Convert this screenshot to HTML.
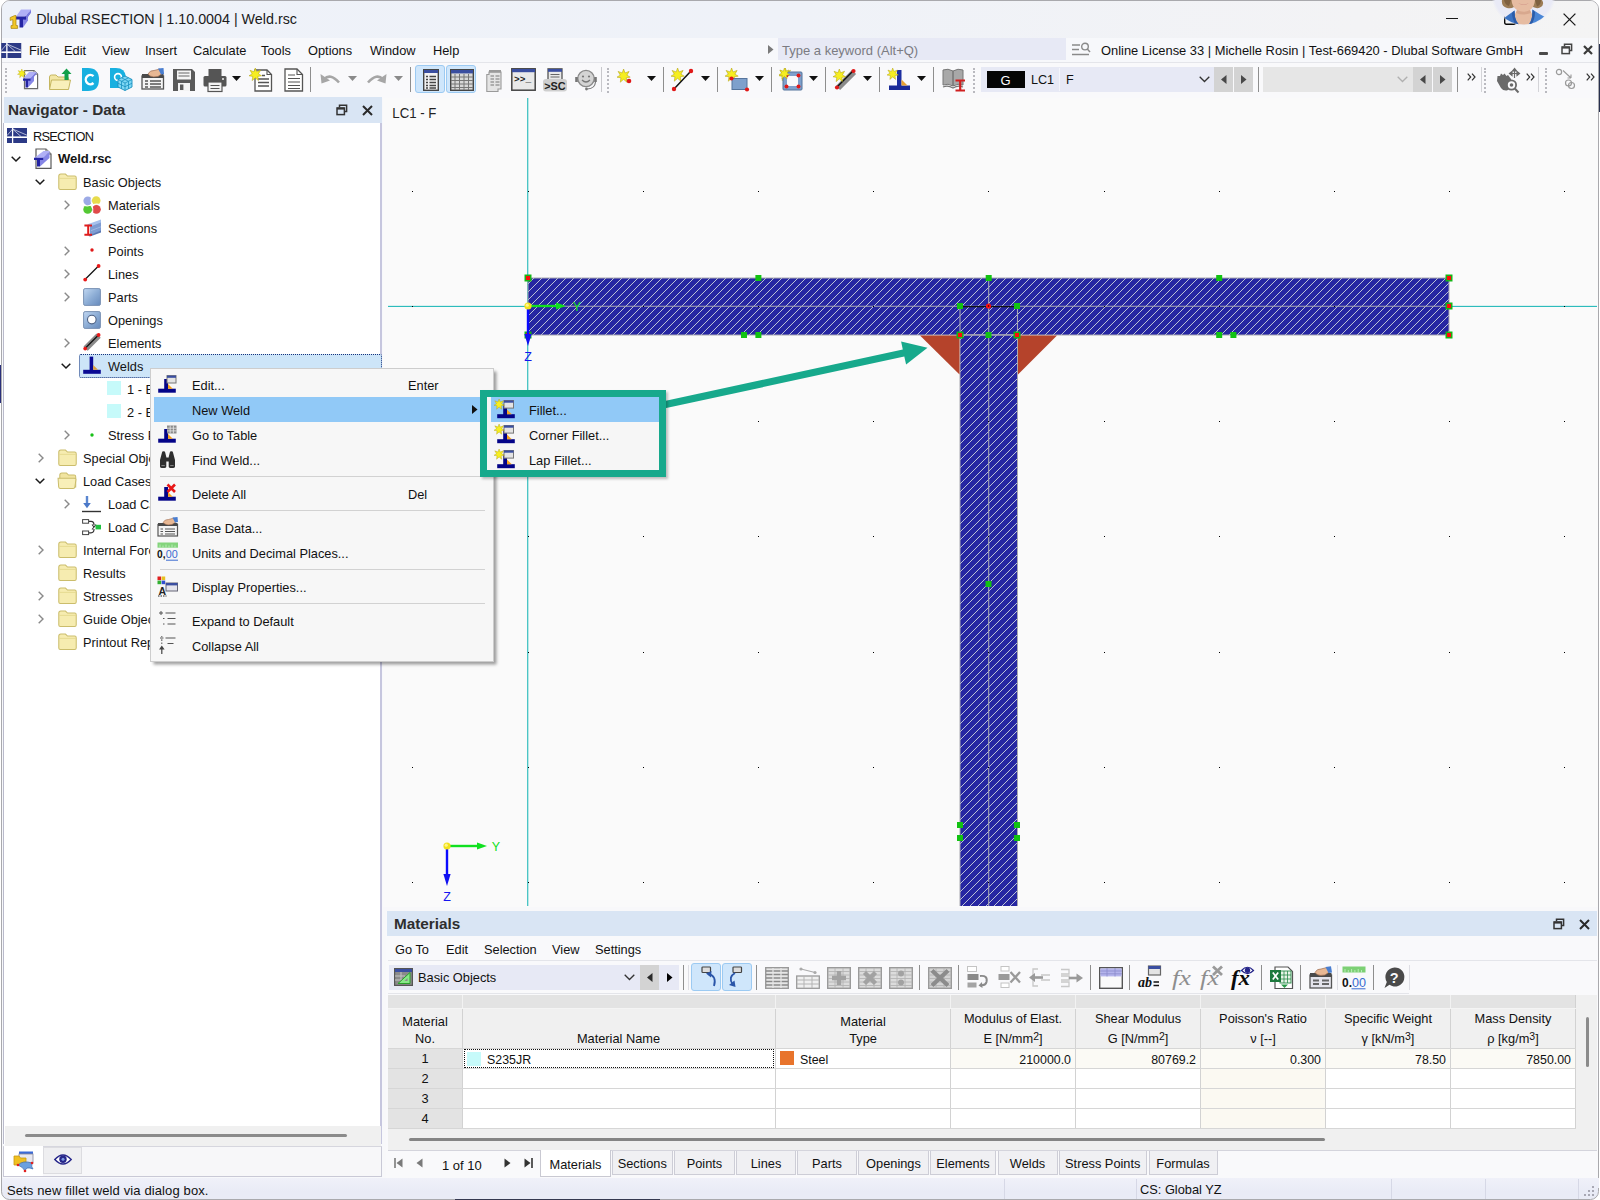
<!DOCTYPE html>
<html lang="en"><head><meta charset="utf-8"><title>Dlubal RSECTION | 1.10.0004 | Weld.rsc</title>
<style>
*{box-sizing:border-box;margin:0;padding:0}
html,body{width:1600px;height:1200px;overflow:hidden;background:#f3f4f8}
body{font-family:"Liberation Sans",sans-serif;font-size:13px;color:#111;}
#app{position:absolute;left:0;top:0;width:1600px;height:1200px;overflow:hidden}
.abs{position:absolute}
.t{position:absolute;white-space:nowrap;line-height:1}
svg{position:absolute;overflow:visible}

</style></head>
<body>
<div id="app">
<!-- frame -->
<div class="abs" style="left:0;top:0;width:1600px;height:1200px;background:#ffffff"></div>
<div class="abs" id="win" style="left:1px;top:0;width:1598px;height:1200px;border-radius:9px;background:#f7f8fb;border:1px solid #a9a9ad"></div>

<!-- titlebar -->
<div class="abs" style="left:2px;top:1px;width:1596px;height:37px;border-radius:8px 8px 0 0;background:linear-gradient(90deg,#eef2f9 0%,#eff2f8 50%,#f3f3f5 85%,#f4f4f4 100%)"></div>
<svg style="left:9px;top:8px" width="23" height="22" viewBox="0 0 23 22"><polygon points="14,11.5 19,4.5 19,12.5 14,19.5" fill="#8686e6"/><polygon points="14,11.5 17,11.5 22,4.5 19,4.5" fill="#5a5ac4"/><polygon points="7,8.5 17,8.5 22,1.5 12,1.5" fill="#b0b0f6"/><polygon points="17,8.5 22,1.5 22,4.5 17,11.5" fill="#7a7ade"/><path d="M7,8.5 H17 V11.5 H14 V19.5 H10.5 V11.5 H7 Z" fill="#2424a4"/><path d="M1.2,9.5 L5.6,7.6 H7 V17.6 H8.6 V20.4 H2 V17.6 H3.8 V11.6 L1.2,12.4 Z" fill="#f2c828" stroke="#a8820c" stroke-width="0.7"/></svg>
<div class="t" style="left:36.3px;top:12.2px;font-size:14.3px;color:#1b1b1b">Dlubal RSECTION | 1.10.0004 | Weld.rsc</div>
<div class="abs" style="left:1446px;top:18px;width:12px;height:1.4px;background:#1a1a1a"></div>
<svg style="left:1563px;top:13px" width="13" height="13" viewBox="0 0 13 13"><path d="M0.6,0.6 L12.4,12.4 M12.4,0.6 L0.6,12.4" stroke="#1a1a1a" stroke-width="1.3"/></svg>
<svg style="left:1504px;top:13px" width="12" height="12" viewBox="0 0 12 12"><rect x="0.7" y="0.7" width="10.6" height="10.6" rx="1.5" fill="none" stroke="#0a0a0a" stroke-width="1.4"/></svg>
<svg style="left:1485px;top:0" width="80" height="32" viewBox="1485 0 80 32">
<defs><clipPath id="av"><circle cx="1523.5" cy="-6.5" r="31"/></clipPath>
<radialGradient id="avg" cx="1523.5" cy="-6.5" r="32.5" gradientUnits="userSpaceOnUse"><stop offset="0.9" stop-color="#e9eaf6"/><stop offset="1" stop-color="#e9eaf6" stop-opacity="0"/></radialGradient></defs>
<circle cx="1523.5" cy="-6.5" r="32.5" fill="url(#avg)"/>
<g clip-path="url(#av)">
<path d="M1502,0 Q1501,6 1507,8 Q1511,9 1514,7 L1533,7 Q1537,9 1540,7.5 Q1545,5 1542,0 Z" fill="#9c7c56"/>
<path d="M1504,0 Q1505,5 1509,6 L1511,0 Z M1541,0 Q1541,5 1537,6.5 L1535,0 Z" fill="#7e6040"/>
<path d="M1511.5,0 Q1512,7 1517,10 L1515,14 L1514,26 H1533 L1532,14 L1530,10 Q1534.5,7 1535,0 Z" fill="#e6bca2"/>
<path d="M1517,10 Q1523.5,13.5 1530,10 L1531,13 Q1523.5,16 1516,13 Z" fill="#d8a88e"/>
<path d="M1518,3.2 Q1523.5,5.2 1529,3.2 Q1523.5,6 1518,3.2 Z" fill="#b86c6c"/>
<path d="M1503,19 Q1508,15 1514.5,10.5 L1515,17 Q1516,22 1520,26 L1500,26 Z" fill="#3c74c4"/>
<path d="M1545,17 Q1539,14 1532.5,9.5 L1532,17 Q1531,22 1528,26 L1548,26 Z" fill="#4a86d6"/>
<path d="M1514.5,10.5 L1515,17 Q1516,22 1520,26 L1517,26 Q1512,20 1512,13 Z" fill="#2c5ca8"/>
<path d="M1532.5,9.5 L1532,17 Q1531,22 1528,26 L1530.5,26 Q1535,20 1535,12 Z" fill="#2c5ca8"/>
</g></svg>
<!-- menubar -->
<div class="abs" style="left:2px;top:38px;width:1596px;height:24px;background:#f7f8fb"></div>
<svg style="left:0.7px;top:42.5px" width="20.5" height="15" viewBox="0 0 20 15"><rect width="20" height="15" fill="#2c3a86"/><path d="M0,9.2 H20" stroke="#fff" stroke-width="1.6"/><path d="M5.6,0 V15" stroke="#fff" stroke-width="1.3"/><path d="M5.6,1 L0,7.6 M5.6,1 L20,7.2 M5.6,1 L14,8.5" stroke="#e8ecf8" stroke-width="0.7" fill="none"/></svg>
<div class="t" style="left:29px;top:44.5px;font-size:12.8px;color:#111">File</div>
<div class="t" style="left:64px;top:44.5px;font-size:12.8px;color:#111">Edit</div>
<div class="t" style="left:102px;top:44.5px;font-size:12.8px;color:#111">View</div>
<div class="t" style="left:145px;top:44.5px;font-size:12.8px;color:#111">Insert</div>
<div class="t" style="left:193px;top:44.5px;font-size:12.8px;color:#111">Calculate</div>
<div class="t" style="left:261px;top:44.5px;font-size:12.8px;color:#111">Tools</div>
<div class="t" style="left:308px;top:44.5px;font-size:12.8px;color:#111">Options</div>
<div class="t" style="left:370px;top:44.5px;font-size:12.8px;color:#111">Window</div>
<div class="t" style="left:433px;top:44.5px;font-size:12.8px;color:#111">Help</div>
<div class="abs" style="left:778px;top:38px;width:288px;height:22px;background:#e7e9f5"></div>
<svg style="left:768px;top:45px" width="6" height="9" viewBox="0 0 6 9"><path d="M0,0 L5.5,4.5 L0,9 Z" fill="#7a7a7a"/></svg>
<div class="t" style="left:782px;top:43.5px;font-size:13px;color:#7b7b82">Type a keyword (Alt+Q)</div>
<svg style="left:1072px;top:42px" width="19" height="14" viewBox="0 0 19 14"><path d="M0,3 H8 M0,7.5 H7 M0,12.5 H17" stroke="#8a8a8a" stroke-width="1.4"/><circle cx="13" cy="4.6" r="3.3" fill="none" stroke="#8a8a8a" stroke-width="1.4"/><path d="M15.3,7 L18,10" stroke="#8a8a8a" stroke-width="1.5"/></svg>
<div class="t" style="left:1101px;top:44.5px;font-size:12.9px;color:#111">Online License 33 | Michelle Rosin | Test-669420 - Dlubal Software GmbH</div>
<div class="abs" style="left:1539px;top:52px;width:9px;height:2.6px;background:#4a4a4a;border-radius:1px"></div>
<svg style="left:1561px;top:43px" width="12" height="12" viewBox="0 0 12 12"><path d="M3.5,3.2 V1.2 H10.6 V7.6 H8.6" fill="none" stroke="#444" stroke-width="1.5"/><rect x="1" y="4" width="7.4" height="6.6" fill="none" stroke="#444" stroke-width="1.5"/><path d="M1,4.6 H8.4" stroke="#444" stroke-width="2"/></svg>
<svg style="left:1583px;top:45px" width="10" height="10" viewBox="0 0 10 10"><path d="M1,1 L9,9 M9,1 L1,9" stroke="#3a3a3a" stroke-width="2.2"/></svg>
<div class="abs" style="left:1598.5px;top:44px;width:1.5px;height:68px;background:#27304e"></div>
<div class="abs" style="left:0;top:365px;width:1.2px;height:38px;background:#2a2f7a"></div>
<!-- toolbar -->
<div class="abs" style="left:2px;top:62px;width:1596px;height:36px;background:#f9f9fb;border-top:1px solid #e4e5ea"></div>
<div class="abs" style="left:5px;top:68px;width:0;height:25px;border-left:2px dotted #b9b9bf"></div>
<svg style="left:17px;top:68px" width="22" height="22" viewBox="0 0 22 22"><path d="M7.5,2.6 H17 L20.6,6.2 V20.6 H7.5 Z" fill="#fff" stroke="#6a6a6a" stroke-width="1.2"/><path d="M17,2.6 V6.2 H20.6" fill="#e4e4e4" stroke="#6a6a6a" stroke-width="0.9"/><polygon points="11,12.5 17,6 17,13 11,19.5" fill="#8686e6"/><polygon points="6,10.5 13.5,10.5 19.5,4 12,4" fill="#b0b0f6"/><polygon points="13.5,10.5 19.5,4 19.5,6 13.5,12.5" fill="#7a7ade"/><path d="M6,10.5 H13.5 V12.7 H11 V19.5 H8.5 V12.7 H6 Z" fill="#2424a4"/><g transform="translate(0.5,1) scale(0.72)"><path d="M6,0 L7.3,3.6 L11,2.2 L9,5.6 L12,7.4 L8.4,8 L9,12 L6,9.4 L3,12 L3.6,8 L0,7.4 L3,5.6 L1,2.2 L4.7,3.6 Z" fill="#f6ee20" stroke="#b0a010" stroke-width="0.5"/></g></svg>
<svg style="left:48px;top:68px" width="25" height="23" viewBox="0 0 25 23"><path d="M1.5,9 Q1.5,7 3.5,7 H8 L10,9 H19 Q20.5,9 20.5,10.5 V21 H1.5 Z" fill="#f3e7a6" stroke="#c5b660" stroke-width="1"/><path d="M3.5,12 H22.5 L20.5,21.5 H1.5 Z" fill="#f8efba" stroke="#c5b660" stroke-width="1"/><path d="M16.5,12 V6 H13.5 L18.5,0.5 L23.5,6 H20.5 V12 Z" fill="#12a04a"/></svg>
<svg style="left:82px;top:68px" width="17" height="23" viewBox="0 0 17 23"><path d="M0,0 H6 Q17,0 17,11.5 Q17,23 6,23 H0 Z" fill="#18b0e0"/><path d="M11.5,8.2 A4.6,4.6 0 1 0 11.5,15" fill="none" stroke="#fff" stroke-width="2.4"/></svg>
<svg style="left:110px;top:68px" width="24" height="23" viewBox="0 0 24 23"><path d="M0,0 H6 Q15,0 16,9 V20 H0 Z" fill="#18b0e0"/><circle cx="8" cy="9" r="3.4" fill="none" stroke="#fff" stroke-width="1.6"/><path d="M15,8 L22,11.5 V19 L15,22.5 L8,19 V11.5 Z" fill="#7fd8f4" stroke="#1890c0" stroke-width="0.9"/><path d="M8,11.5 L15,15 L22,11.5 M15,15 V22.5 M11.5,9.8 L18.5,13.3 V20.8 M18.5,9.8 L11.5,13.3 V20.8 M8,15.2 L15,18.7 L22,15.2" fill="none" stroke="#1890c0" stroke-width="0.8"/></svg>
<svg style="left:141px;top:68px" width="24" height="22" viewBox="0 0 24 22"><rect x="1" y="8" width="21.5" height="13" fill="#f4f4f4" stroke="#555" stroke-width="1.3"/><rect x="1" y="6" width="21.5" height="4" fill="#4a4a4a"/><path d="M4,13 H7 M9,13 H20 M4,16 H7 M9,16 H20 M4,19 H7 M9,19 H20" stroke="#555" stroke-width="1.3"/><path d="M7,6 Q9,2 13,2.5 L19,1 L22,5 L17,8.5 Q12,9.5 9,8 Z" fill="#e8b894" stroke="#9c6c50" stroke-width="0.7"/><path d="M17,0.5 L22.5,0 L23,6 L20,6.5 Z" fill="#4a7ed0"/></svg>
<svg style="left:172px;top:68px" width="24" height="24" viewBox="0 0 24 24"><path d="M1,1 H20 L23,4 V23 H1 Z" fill="#5a5a5a"/><rect x="5" y="2.5" width="14" height="9" fill="#f4f4f4"/><path d="M6.5,5 H17.5 M6.5,8 H17.5" stroke="#666" stroke-width="1.2"/><rect x="6" y="15" width="12" height="8" fill="#f4f4f4"/><rect x="8" y="16.5" width="3.4" height="5.5" fill="#5a5a5a"/></svg>
<svg style="left:203px;top:68px" width="24" height="24" viewBox="0 0 24 24"><rect x="5.5" y="1" width="13" height="7" fill="#555"/><rect x="0.5" y="8" width="23" height="10.5" rx="1.5" fill="#555"/><rect x="5" y="14" width="14" height="9.5" fill="#f4f4f4" stroke="#555" stroke-width="1.2"/><path d="M7.5,17.5 H16.5 M7.5,20.5 H16.5" stroke="#555" stroke-width="1.1"/><circle cx="20" cy="11" r="1" fill="#eee"/></svg>
<svg style="left:232px;top:76px" width="9" height="5" viewBox="0 0 9 5"><path d="M0,0 H9 L4.5,5 Z" fill="#111"/></svg>
<svg style="left:249px;top:67px" width="24" height="25" viewBox="0 0 24 25"><path d="M6,3 H18 L22.5,7.5 V24 H6 Z" fill="#fff" stroke="#555" stroke-width="1.3"/><path d="M18,3 V7.5 H22.5" fill="none" stroke="#555" stroke-width="1.1"/><path d="M9,12 H20 M9,15.5 H20 M9,19 H20 M13,8.5 H16" stroke="#555" stroke-width="1.3"/><g transform="translate(0,1) scale(1.05)"><path d="M6,0 L7.3,3.6 L11,2.2 L9,5.6 L12,7.4 L8.4,8 L9,12 L6,9.4 L3,12 L3.6,8 L0,7.4 L3,5.6 L1,2.2 L4.7,3.6 Z" fill="#f6ee20" stroke="#b0a010" stroke-width="0.5"/></g></svg>
<svg style="left:284px;top:68px" width="20" height="24" viewBox="0 0 20 24"><path d="M1,1 H13 L18.5,6.5 V23 H1 Z" fill="#fff" stroke="#555" stroke-width="1.3"/><path d="M13,1 V6.5 H18.5" fill="none" stroke="#555" stroke-width="1.1"/><path d="M4,7 H11 M4,10.5 H16 M4,14 H16 M4,17.5 H16 M4,20.5 H16" stroke="#555" stroke-width="1.2"/></svg>
<div class="abs" style="left:310px;top:67px;width:1px;height:25px;background:#8e8e8e"></div>
<svg style="left:320px;top:72px" width="21" height="14" viewBox="0 0 21 14"><path d="M4,7.5 Q10,0.5 19,10.5" fill="none" stroke="#a6a6a6" stroke-width="2.6"/><path d="M0.5,2 L1.5,11.5 L10,8.5 Z" fill="#a6a6a6"/></svg>
<svg style="left:348px;top:76px" width="9" height="5" viewBox="0 0 9 5"><path d="M0,0 H9 L4.5,5 Z" fill="#8a8a8a"/></svg>
<svg style="left:366px;top:72px" width="21" height="14" viewBox="0 0 21 14"><path d="M17,7.5 Q11,0.5 2,10.5" fill="none" stroke="#a6a6a6" stroke-width="2.6"/><path d="M20.5,2 L19.5,11.5 L11,8.5 Z" fill="#a6a6a6"/></svg>
<svg style="left:394px;top:76px" width="9" height="5" viewBox="0 0 9 5"><path d="M0,0 H9 L4.5,5 Z" fill="#8a8a8a"/></svg>
<div class="abs" style="left:410px;top:67px;width:1px;height:25px;background:#8e8e8e"></div>
<div class="abs" style="left:415px;top:65px;width:30px;height:28px;background:#cfe6fb;border:1px solid #9ccaf2;border-radius:3px"></div>
<div class="abs" style="left:446px;top:65px;width:30px;height:28px;background:#cfe6fb;border:1px solid #9ccaf2;border-radius:3px"></div>
<svg style="left:423px;top:69px" width="16" height="22" viewBox="0 0 16 22"><rect x="0.7" y="0.7" width="14.6" height="20.6" fill="#f2f2f2" stroke="#444" stroke-width="1.4"/><rect x="1" y="1" width="14" height="3" fill="#3a4ea0"/><path d="M3,7.5 H5 M6.5,7.5 H13 M3,10.5 H5 M6.5,10.5 H13 M3,13.5 H5 M6.5,13.5 H13 M3,16.5 H5 M6.5,16.5 H13 M3,19 H5 M6.5,19 H13" stroke="#444" stroke-width="1.4"/></svg>
<svg style="left:450px;top:69px" width="24" height="22" viewBox="0 0 24 22"><rect x="0.7" y="0.7" width="22.6" height="20.6" fill="#d8d8d8" stroke="#444" stroke-width="1.4"/><rect x="1" y="1" width="22" height="3.4" fill="#3a4ea0"/><path d="M1,8 H23 M1,11.5 H23 M1,15 H23 M1,18.5 H23 M5,5 V21 M9.5,5 V21 M14,5 V21 M18.5,5 V21" stroke="#777" stroke-width="1"/></svg>
<svg style="left:486px;top:69px" width="16" height="23" viewBox="0 0 16 23"><path d="M3,3 H15 V20 H12 V22.5 H0.8 V5.5 H3 Z" fill="#e4e4e4" stroke="#9a9a9a" stroke-width="1.1"/><rect x="3" y="1" width="12" height="2.6" fill="#9a9a9a"/><path d="M4.5,7 H8 M9.5,7 H13.5 M4.5,10 H8 M9.5,10 H13.5 M4.5,13 H8 M9.5,13 H13.5 M4.5,16 H8 M9.5,16 H13.5" stroke="#9a9a9a" stroke-width="1.3"/></svg>
<svg style="left:511px;top:68px" width="25" height="23" viewBox="0 0 25 23"><rect x="0.8" y="0.8" width="23.4" height="21.4" fill="#e9e9e9" stroke="#444" stroke-width="1.5"/><rect x="1" y="1" width="23" height="3.2" fill="#3a4ea0"/><text x="3" y="14" font-family="Liberation Mono, monospace" font-size="9.5" font-weight="bold" fill="#222">&gt;&gt;_</text></svg>
<svg style="left:543px;top:68px" width="24" height="24" viewBox="0 0 24 24"><rect x="5" y="0.8" width="14" height="12" fill="#e9e9e9" stroke="#555" stroke-width="1.3"/><rect x="5" y="1" width="14" height="2.8" fill="#3a4ea0"/><path d="M7.5,6.5 H16.5 M7.5,9 H16.5" stroke="#666" stroke-width="1.1"/><rect x="0" y="11" width="24" height="12.5" rx="3" fill="#cfcfcf"/><text x="1.2" y="21.6" font-family="Liberation Sans, sans-serif" font-size="11" font-weight="bold" fill="#222" textLength="21.5" lengthAdjust="spacingAndGlyphs">&gt;SC</text></svg>
<svg style="left:574px;top:68px" width="24" height="24" viewBox="0 0 24 24"><circle cx="12" cy="10.5" r="8.2" fill="#d4d4d4" stroke="#8a8a8a" stroke-width="1.3"/><circle cx="9" cy="8.5" r="1.1" fill="#777"/><circle cx="15" cy="8.5" r="1.1" fill="#777"/><path d="M8,12 Q12,16 16,12" fill="none" stroke="#777" stroke-width="1.2"/><path d="M2.5,14 V9 M21.5,14 V9" stroke="#777" stroke-width="2.6"/><path d="M21.5,14 Q21,20.5 13.5,21" fill="none" stroke="#777" stroke-width="1.1"/><circle cx="12.5" cy="21" r="1.4" fill="#777"/></svg>
<div class="abs" style="left:601px;top:67px;width:1px;height:25px;background:#c8c8cc"></div>
<div class="abs" style="left:607px;top:68px;width:0;height:25px;border-left:2px dotted #b9b9bf"></div>
<svg style="left:617px;top:69px" width="16" height="18" viewBox="0 0 16 18"><g transform="translate(0,0) scale(1.1)"><path d="M6,0 L7.3,3.6 L11,2.2 L9,5.6 L12,7.4 L8.4,8 L9,12 L6,9.4 L3,12 L3.6,8 L0,7.4 L3,5.6 L1,2.2 L4.7,3.6 Z" fill="#f6ee20" stroke="#b0a010" stroke-width="0.5"/></g><circle cx="12" cy="12" r="2.3" fill="#e01818"/></svg>
<svg style="left:647px;top:76px" width="9" height="5" viewBox="0 0 9 5"><path d="M0,0 H9 L4.5,5 Z" fill="#111"/></svg>
<div class="abs" style="left:663px;top:67px;width:1px;height:25px;background:#8e8e8e"></div>
<svg style="left:670px;top:68px" width="25" height="24" viewBox="0 0 25 24"><g transform="translate(1,0) scale(1.1)"><path d="M6,0 L7.3,3.6 L11,2.2 L9,5.6 L12,7.4 L8.4,8 L9,12 L6,9.4 L3,12 L3.6,8 L0,7.4 L3,5.6 L1,2.2 L4.7,3.6 Z" fill="#f6ee20" stroke="#b0a010" stroke-width="0.5"/></g><path d="M4,21 L21,3" stroke="#111" stroke-width="1.5"/><circle cx="4" cy="21" r="2.2" fill="#e01818"/><circle cx="21" cy="3" r="2.2" fill="#e01818"/></svg>
<svg style="left:701px;top:76px" width="9" height="5" viewBox="0 0 9 5"><path d="M0,0 H9 L4.5,5 Z" fill="#111"/></svg>
<div class="abs" style="left:717px;top:67px;width:1px;height:25px;background:#8e8e8e"></div>
<svg style="left:725px;top:68px" width="25" height="24" viewBox="0 0 25 24"><g transform="translate(0,0) scale(1.1)"><path d="M6,0 L7.3,3.6 L11,2.2 L9,5.6 L12,7.4 L8.4,8 L9,12 L6,9.4 L3,12 L3.6,8 L0,7.4 L3,5.6 L1,2.2 L4.7,3.6 Z" fill="#f6ee20" stroke="#b0a010" stroke-width="0.5"/></g><rect x="7" y="10.5" width="15" height="11" fill="#7ea0cc" stroke="#55749c" stroke-width="1"/><circle cx="6.5" cy="10.5" r="2.1" fill="#e01818"/><circle cx="22" cy="21.5" r="2.1" fill="#e01818"/></svg>
<svg style="left:755px;top:76px" width="9" height="5" viewBox="0 0 9 5"><path d="M0,0 H9 L4.5,5 Z" fill="#111"/></svg>
<div class="abs" style="left:771px;top:67px;width:1px;height:25px;background:#8e8e8e"></div>
<svg style="left:779px;top:68px" width="25" height="24" viewBox="0 0 25 24"><g transform="translate(0,0) scale(1.05)"><path d="M6,0 L7.3,3.6 L11,2.2 L9,5.6 L12,7.4 L8.4,8 L9,12 L6,9.4 L3,12 L3.6,8 L0,7.4 L3,5.6 L1,2.2 L4.7,3.6 Z" fill="#f6ee20" stroke="#b0a010" stroke-width="0.5"/></g><rect x="4" y="4" width="19" height="18" rx="1" fill="#7ea0cc" stroke="#55749c" stroke-width="1"/><rect x="8" y="8" width="11" height="10" fill="#f9f9fb"/><circle cx="7.5" cy="7.5" r="2" fill="#e01818"/><circle cx="19.5" cy="7.5" r="2" fill="#e01818"/><circle cx="7.5" cy="18.5" r="2" fill="#e01818"/><circle cx="19.5" cy="18.5" r="2" fill="#e01818"/><g transform="translate(0,0) scale(0.9)"><path d="M6,0 L7.3,3.6 L11,2.2 L9,5.6 L12,7.4 L8.4,8 L9,12 L6,9.4 L3,12 L3.6,8 L0,7.4 L3,5.6 L1,2.2 L4.7,3.6 Z" fill="#f6ee20" stroke="#b0a010" stroke-width="0.5"/></g></svg>
<svg style="left:809px;top:76px" width="9" height="5" viewBox="0 0 9 5"><path d="M0,0 H9 L4.5,5 Z" fill="#111"/></svg>
<div class="abs" style="left:825px;top:67px;width:1px;height:25px;background:#8e8e8e"></div>
<svg style="left:833px;top:68px" width="25" height="24" viewBox="0 0 25 24"><path d="M5,20 L21,4" stroke="#8a8a8a" stroke-width="6"/><path d="M3.5,19.5 L20,3" stroke="#111" stroke-width="1.4"/><circle cx="4" cy="19.5" r="2.1" fill="#e01818"/><circle cx="20.5" cy="3" r="2.1" fill="#e01818"/><g transform="translate(0,1) scale(1.05)"><path d="M6,0 L7.3,3.6 L11,2.2 L9,5.6 L12,7.4 L8.4,8 L9,12 L6,9.4 L3,12 L3.6,8 L0,7.4 L3,5.6 L1,2.2 L4.7,3.6 Z" fill="#f6ee20" stroke="#b0a010" stroke-width="0.5"/></g></svg>
<svg style="left:863px;top:76px" width="9" height="5" viewBox="0 0 9 5"><path d="M0,0 H9 L4.5,5 Z" fill="#111"/></svg>
<div class="abs" style="left:879px;top:67px;width:1px;height:25px;background:#8e8e8e"></div>
<svg style="left:887px;top:68px" width="25" height="24" viewBox="0 0 25 24"><path d="M10,2 H14.5 V18 H10 Z" fill="#1c2ea0"/><path d="M2,17.5 H23 V22 H2 Z" fill="#1a2a98"/><path d="M14.5,11.5 L20.5,17.5 H14.5 Z" fill="#e8a030"/><g transform="translate(0,0) scale(0.95)"><path d="M6,0 L7.3,3.6 L11,2.2 L9,5.6 L12,7.4 L8.4,8 L9,12 L6,9.4 L3,12 L3.6,8 L0,7.4 L3,5.6 L1,2.2 L4.7,3.6 Z" fill="#f6ee20" stroke="#b0a010" stroke-width="0.5"/></g></svg>
<svg style="left:917px;top:76px" width="9" height="5" viewBox="0 0 9 5"><path d="M0,0 H9 L4.5,5 Z" fill="#111"/></svg>
<div class="abs" style="left:933px;top:67px;width:1px;height:25px;background:#8e8e8e"></div>
<svg style="left:942px;top:68px" width="25" height="25" viewBox="0 0 25 25"><path d="M1,2 Q6,0 11,3 V18 Q6,15 1,17 Z M21,2 Q16,0 11,3 V18 Q16,15 21,17 Z" fill="#a8a8a8" stroke="#777" stroke-width="1"/><path d="M1,19 Q6,17 11,20 Q16,17 21,19" fill="none" stroke="#777" stroke-width="1.2"/><path d="M13.5,12.5 H23 M13.5,22.5 H23 M18.2,12.5 V22.5" stroke="#d02020" stroke-width="2.2"/></svg>
<div class="abs" style="left:973px;top:68px;width:0;height:25px;border-left:2px dotted #b9b9bf"></div>
<div class="abs" style="left:981px;top:67px;width:236px;height:25px;background:#e7e9f5"></div>
<div class="abs" style="left:987px;top:71px;width:38px;height:16.5px;background:#050505"></div>
<div class="t" style="left:1000.5px;top:73.6px;font-size:13px;color:#fff">G</div>
<div class="t" style="left:1031px;top:73.6px;font-size:12.6px;color:#111">LC1</div>
<div class="abs" style="left:1058.5px;top:68px;width:1px;height:23px;background:#f4f5fb"></div>
<div class="t" style="left:1066px;top:73.6px;font-size:12.6px;color:#111">F</div>
<svg style="left:1199px;top:76px" width="11" height="7" viewBox="0 0 11 7"><path d="M0.7,0.7 L5.5,5.5 L10.3,0.7" fill="none" stroke="#333" stroke-width="1.3"/></svg>
<div class="abs" style="left:1214px;top:67px;width:19px;height:25px;background:#d3d3d3"></div><svg style="left:1220.5px;top:75px" width="6" height="9" viewBox="0 0 6 9"><path d="M5.5,0 V9 L0,4.5 Z" fill="#484848"/></svg>
<div class="abs" style="left:1234px;top:67px;width:19px;height:25px;background:#d3d3d3"></div><svg style="left:1240.5px;top:75px" width="6" height="9" viewBox="0 0 6 9"><path d="M0,0 V9 L5.5,4.5 Z" fill="#484848"/></svg>
<div class="abs" style="left:1258px;top:67px;width:1px;height:25px;background:#8e8e8e"></div>
<div class="abs" style="left:1263px;top:67px;width:150px;height:25px;background:#e6e6e6"></div>
<svg style="left:1397px;top:76px" width="11" height="7" viewBox="0 0 11 7"><path d="M0.7,0.7 L5.5,5.5 L10.3,0.7" fill="none" stroke="#b0b0b0" stroke-width="1.3"/></svg>
<div class="abs" style="left:1413px;top:67px;width:19px;height:25px;background:#d3d3d3"></div><svg style="left:1419.5px;top:75px" width="6" height="9" viewBox="0 0 6 9"><path d="M5.5,0 V9 L0,4.5 Z" fill="#484848"/></svg>
<div class="abs" style="left:1433px;top:67px;width:19px;height:25px;background:#d3d3d3"></div><svg style="left:1439.5px;top:75px" width="6" height="9" viewBox="0 0 6 9"><path d="M0,0 V9 L5.5,4.5 Z" fill="#484848"/></svg>
<div class="abs" style="left:1457px;top:67px;width:1px;height:25px;background:#8e8e8e"></div>
<svg style="left:1467px;top:73px" width="9" height="8" viewBox="0 0 9 8"><path d="M0.7,0.7 L3.7,4 L0.7,7.3 M5,0.7 L8,4 L5,7.3" fill="none" stroke="#333" stroke-width="1.2"/></svg>
<div class="abs" style="left:1481px;top:67px;width:1px;height:25px;background:#d4d4d8"></div>
<div class="abs" style="left:1484px;top:68px;width:0;height:25px;border-left:2px dotted #b9b9bf"></div>
<svg style="left:1494px;top:68px" width="26" height="25" viewBox="0 0 26 25"><path d="M3,13 L7,20 Q9,23 13,22.5 L17,20 V11 L14,7 L12.5,8 L10.5,5.5 L9,7 L7,5.5 L6,8 L3.5,8 Z" fill="#6a6a6a"/><circle cx="17.5" cy="17" r="4.6" fill="#f9f9fb" stroke="#6a6a6a" stroke-width="1.8"/><circle cx="17.5" cy="17" r="1.8" fill="#6a6a6a"/><path d="M20.8,20.5 L24.5,24.5" stroke="#6a6a6a" stroke-width="2"/><path d="M20.5,1 V10 M16,5.5 H25 M20.5,0.5 L18.5,3 H22.5 Z M25.5,5.5 L23,3.5 V7.5 Z M15.5,5.5 L18,3.5 V7.5 Z" stroke="#6a6a6a" stroke-width="1.2" fill="#6a6a6a"/></svg>
<svg style="left:1526px;top:73px" width="9" height="8" viewBox="0 0 9 8"><path d="M0.7,0.7 L3.7,4 L0.7,7.3 M5,0.7 L8,4 L5,7.3" fill="none" stroke="#333" stroke-width="1.2"/></svg>
<div class="abs" style="left:1538px;top:67px;width:1px;height:25px;background:#d4d4d8"></div>
<div class="abs" style="left:1545px;top:68px;width:0;height:25px;border-left:2px dotted #b9b9bf"></div>
<svg style="left:1555px;top:68px" width="22" height="22" viewBox="0 0 22 22"><circle cx="4" cy="4" r="2.6" fill="none" stroke="#9a9a9a" stroke-width="1.2"/><path d="M8,2.5 L16,10 M16,10 V6.5 M16,10 H12.5" fill="none" stroke="#9a9a9a" stroke-width="1.1"/><circle cx="13.5" cy="15" r="3" fill="none" stroke="#9a9a9a" stroke-width="1.2"/><circle cx="16.5" cy="17.5" r="3" fill="none" stroke="#9a9a9a" stroke-width="1.2"/></svg>
<svg style="left:1586px;top:73px" width="9" height="8" viewBox="0 0 9 8"><path d="M0.7,0.7 L3.7,4 L0.7,7.3 M5,0.7 L8,4 L5,7.3" fill="none" stroke="#333" stroke-width="1.2"/></svg>
<!-- navigator -->
<div class="abs" style="left:4px;top:97px;width:378px;height:25.5px;background:#d9e5f4"></div>
<div class="t" style="left:8px;top:102px;font-size:15.3px;font-weight:bold;color:#2e2e2e">Navigator - Data</div>
<svg style="left:336px;top:104px" width="12" height="12" viewBox="0 0 12 12"><path d="M3.5,3.2 V1.2 H10.6 V7.6 H8.6" fill="none" stroke="#333" stroke-width="1.5"/><rect x="1" y="4" width="7.4" height="6.6" fill="none" stroke="#333" stroke-width="1.5"/><path d="M1,4.6 H8.4" stroke="#333" stroke-width="2"/></svg>
<svg style="left:362px;top:105px" width="11" height="11" viewBox="0 0 11 11"><path d="M1,1 L10,10 M10,1 L1,10" stroke="#2a2a2a" stroke-width="2"/></svg>
<div class="abs" style="left:3px;top:123px;width:379px;height:1021px;background:#fff;border-left:1.5px solid #b9bacb;border-right:2px solid #c6c6de"></div>
<svg style="left:7px;top:128px" width="20" height="15" viewBox="0 0 20 15"><rect width="20" height="15" fill="#2c3a86"/><path d="M0,9.2 H20" stroke="#fff" stroke-width="1.6"/><path d="M5.6,0 V15" stroke="#fff" stroke-width="1.3"/><path d="M5.6,1 L0,7.6 M5.6,1 L20,7.2 M5.6,1 L14,8.5" stroke="#e8ecf8" stroke-width="0.7" fill="none"/></svg>
<div class="t" style="left:33px;top:130.6px;font-size:12.8px;letter-spacing:-0.75px;color:#141414">RSECTION</div>
<svg style="left:11px;top:156px" width="10" height="6" viewBox="0 0 10 6"><path d="M0.7,0.7 L5,5 L9.3,0.7" fill="none" stroke="#1a1a1a" stroke-width="1.5"/></svg>
<svg style="left:34px;top:148px" width="18" height="21" viewBox="0 0 18 21"><path d="M2,1 H12 L17,6 V20.4 H2 Z" fill="#fff" stroke="#5a5a5a" stroke-width="1.2"/><path d="M12,1 V6 H17" fill="#dcdcdc" stroke="#5a5a5a" stroke-width="1"/><polygon points="6,12 15.5,3.5 15.5,10 6,18.6" fill="#8686e6"/><polygon points="0.5,9.8 9,9.8 16,3 9.5,3" fill="#b0b0f6"/><path d="M0,9.8 H9.2 V12 H6 V18.6 H3 V12 H0 Z" fill="#2424a4"/></svg>
<div class="t" style="left:58px;top:152.2px;font-size:13.1px;letter-spacing:-0.1px;font-weight:bold;color:#141414">Weld.rsc</div>
<svg style="left:35px;top:179px" width="10" height="6" viewBox="0 0 10 6"><path d="M0.7,0.7 L5,5 L9.3,0.7" fill="none" stroke="#1a1a1a" stroke-width="1.5"/></svg>
<svg style="left:56.5px;top:172px" width="21" height="19.5" viewBox="0 0 20 19"><path d="M1.5,4 Q1.5,2 3.5,2 H8 L10,4 H17 Q18.5,4 18.5,5.5 V15.5 Q18.5,17 17,17 H3 Q1.5,17 1.5,15.5 Z" fill="#f6ecb0" stroke="#cbbd6c" stroke-width="1"/><path d="M2.2,6.2 H18" stroke="#e2d68a" stroke-width="0.8"/></svg>
<div class="t" style="left:83px;top:176.6px;font-size:12.8px;letter-spacing:0;color:#141414">Basic Objects</div>
<svg style="left:64px;top:200px" width="6" height="10" viewBox="0 0 6 10"><path d="M0.7,0.7 L5,5 L0.7,9.3" fill="none" stroke="#8a8a8a" stroke-width="1.4"/></svg>
<svg style="left:83px;top:196px" width="18" height="18" viewBox="0 0 18 18"><circle cx="4.8" cy="4.8" r="4.4" fill="#9caae6"/><circle cx="13.2" cy="4.6" r="4.3" fill="#e8dc4c"/><circle cx="13.4" cy="13.3" r="4.4" fill="#e04a4a"/><circle cx="4.7" cy="13.4" r="4.4" fill="#54c834"/><path d="M9,0.8 Q7.2,4.6 9.2,8.6" stroke="#fff" stroke-width="1.1" fill="none"/><path d="M17.4,9 Q13.4,7.2 9.4,9.2" stroke="#fff" stroke-width="1.1" fill="none"/><path d="M9,17.4 Q10.8,13.4 8.8,9.4" stroke="#fff" stroke-width="1.1" fill="none"/><path d="M0.6,9 Q4.6,10.8 8.6,8.8" stroke="#fff" stroke-width="1.1" fill="none"/><circle cx="9" cy="9" r="1.5" fill="#fff"/></svg>
<div class="t" style="left:108px;top:199.6px;font-size:12.8px;letter-spacing:0;color:#141414">Materials</div>
<svg style="left:84px;top:219px" width="17" height="18" viewBox="0 0 17 18"><polygon points="6,7 17,2.6 17,12.4 6,16" fill="#7e9cd2"/><polygon points="3,5.6 17,0.4 17,3.4 7,7.2" fill="#a6c0ec"/><polygon points="4,16.8 7,15.4 17,11.6 17,13.6 6,17.6" fill="#5a78b2"/><path d="M7,11.6 L17,7.8" stroke="#a0b8e4" stroke-width="1"/><path d="M0.4,6.4 H8 M0.4,15.8 H8 M4.2,6.4 V15.8" stroke="#e01c1c" stroke-width="2" fill="none"/></svg>
<div class="t" style="left:108px;top:222.6px;font-size:12.8px;letter-spacing:0;color:#141414">Sections</div>
<svg style="left:64px;top:246px" width="6" height="10" viewBox="0 0 6 10"><path d="M0.7,0.7 L5,5 L0.7,9.3" fill="none" stroke="#8a8a8a" stroke-width="1.4"/></svg>
<svg style="left:88.5px;top:247px" width="6" height="6" viewBox="0 0 6 6"><circle cx="3" cy="3" r="1.7" fill="#e01818"/></svg>
<div class="t" style="left:108px;top:245.6px;font-size:12.8px;letter-spacing:0;color:#141414">Points</div>
<svg style="left:64px;top:269px" width="6" height="10" viewBox="0 0 6 10"><path d="M0.7,0.7 L5,5 L0.7,9.3" fill="none" stroke="#8a8a8a" stroke-width="1.4"/></svg>
<svg style="left:83px;top:264px" width="18" height="18" viewBox="0 0 18 18"><path d="M2,15.5 L15.5,2" stroke="#111" stroke-width="1.3"/><circle cx="2.2" cy="15.6" r="1.9" fill="#e81818"/><circle cx="15.6" cy="2" r="1.9" fill="#e81818"/></svg>
<div class="t" style="left:108px;top:268.6px;font-size:12.8px;letter-spacing:0;color:#141414">Lines</div>
<svg style="left:64px;top:292px" width="6" height="10" viewBox="0 0 6 10"><path d="M0.7,0.7 L5,5 L0.7,9.3" fill="none" stroke="#8a8a8a" stroke-width="1.4"/></svg>
<svg style="left:83px;top:288px" width="18" height="18" viewBox="0 0 18 18"><defs><linearGradient id="pg0" x1="0" y1="0" x2="1" y2="1"><stop offset="0" stop-color="#c2d8f2"/><stop offset="0.5" stop-color="#8eaed6"/><stop offset="1" stop-color="#668abc"/></linearGradient></defs><rect x="0.6" y="0.6" width="16.8" height="16.8" rx="1.5" fill="url(#pg0)" stroke="#7a92b4" stroke-width="1"/></svg>
<div class="t" style="left:108px;top:291.6px;font-size:12.8px;letter-spacing:0;color:#141414">Parts</div>
<svg style="left:83px;top:311px" width="18" height="18" viewBox="0 0 18 18"><defs><linearGradient id="pg1" x1="0" y1="0" x2="1" y2="1"><stop offset="0" stop-color="#c2d8f2"/><stop offset="0.5" stop-color="#8eaed6"/><stop offset="1" stop-color="#668abc"/></linearGradient></defs><rect x="0.6" y="0.6" width="16.8" height="16.8" rx="1.5" fill="url(#pg1)" stroke="#7a92b4" stroke-width="1"/><circle cx="8.8" cy="8.6" r="4.3" fill="#fff" stroke="#4e6284" stroke-width="1.1"/></svg>
<div class="t" style="left:108px;top:314.6px;font-size:12.8px;letter-spacing:0;color:#141414">Openings</div>
<svg style="left:64px;top:338px" width="6" height="10" viewBox="0 0 6 10"><path d="M0.7,0.7 L5,5 L0.7,9.3" fill="none" stroke="#8a8a8a" stroke-width="1.4"/></svg>
<svg style="left:83px;top:333px" width="18" height="18" viewBox="0 0 18 18"><path d="M2.6,15.6 L15.6,2.6" stroke="#8a8a8a" stroke-width="6" stroke-linecap="butt"/><path d="M2,15.5 L15.5,2" stroke="#111" stroke-width="1.3"/><circle cx="2.2" cy="15.6" r="1.9" fill="#e81818"/><circle cx="15.6" cy="2" r="1.9" fill="#e81818"/></svg>
<div class="t" style="left:108px;top:337.6px;font-size:12.8px;letter-spacing:0;color:#141414">Elements</div>
<div class="abs" style="left:79px;top:354px;width:303px;height:24px;background:#cde5f8;border:1px dotted #16337c;border-radius:2px"></div>
<svg style="left:61px;top:363px" width="10" height="6" viewBox="0 0 10 6"><path d="M0.7,0.7 L5,5 L9.3,0.7" fill="none" stroke="#1a1a1a" stroke-width="1.5"/></svg>
<svg style="left:83px;top:356px" width="18" height="18" viewBox="0 0 18 18"><path d="M6.6,0.6 H10.2 V15 H6.6 Z" fill="#0a0a94"/><path d="M0.2,13.8 H17.8 V17.8 H0.2 Z" fill="#0a0a94"/><path d="M10.2,9 L15,13.8 H10.2 Z" fill="#dca040"/></svg>
<div class="t" style="left:108px;top:360.6px;font-size:12.8px;letter-spacing:0;color:#141414">Welds</div>
<div class="abs" style="left:107px;top:381px;width:14px;height:14px;background:#c6fafa"></div>
<div class="t" style="left:127px;top:383.6px;font-size:12.8px;letter-spacing:0;color:#141414">1 - E</div>
<div class="abs" style="left:107px;top:404px;width:14px;height:14px;background:#c6fafa"></div>
<div class="t" style="left:127px;top:406.6px;font-size:12.8px;letter-spacing:0;color:#141414">2 - E</div>
<svg style="left:64px;top:430px" width="6" height="10" viewBox="0 0 6 10"><path d="M0.7,0.7 L5,5 L0.7,9.3" fill="none" stroke="#8a8a8a" stroke-width="1.4"/></svg>
<svg style="left:88.5px;top:432px" width="6" height="6" viewBox="0 0 6 6"><circle cx="3" cy="3" r="1.7" fill="#18c018"/></svg>
<div class="t" style="left:108px;top:429.6px;font-size:12.8px;letter-spacing:0;color:#141414">Stress Points</div>
<svg style="left:38px;top:453px" width="6" height="10" viewBox="0 0 6 10"><path d="M0.7,0.7 L5,5 L0.7,9.3" fill="none" stroke="#8a8a8a" stroke-width="1.4"/></svg>
<svg style="left:56.5px;top:448px" width="21" height="19.5" viewBox="0 0 20 19"><path d="M1.5,4 Q1.5,2 3.5,2 H8 L10,4 H17 Q18.5,4 18.5,5.5 V15.5 Q18.5,17 17,17 H3 Q1.5,17 1.5,15.5 Z" fill="#f6ecb0" stroke="#cbbd6c" stroke-width="1"/><path d="M2.2,6.2 H18" stroke="#e2d68a" stroke-width="0.8"/></svg>
<div class="t" style="left:83px;top:452.6px;font-size:12.8px;letter-spacing:0;color:#141414">Special Objects</div>
<svg style="left:35px;top:478px" width="10" height="6" viewBox="0 0 10 6"><path d="M0.7,0.7 L5,5 L9.3,0.7" fill="none" stroke="#1a1a1a" stroke-width="1.5"/></svg>
<svg style="left:56.5px;top:471px" width="21" height="19.5" viewBox="0 0 20 19"><path d="M2.5,4 Q2.5,2 4.5,2 H9 L11,4 H16.5 Q18,4 18,5.5 V15.5 H2.5 Z" fill="#f1e4a0" stroke="#cbbd6c" stroke-width="1"/><path d="M0.8,7 H16.8 Q18.4,7 18.2,8.5 L17.2,15.6 Q17,17 15.5,17 H3 Q1.6,17 1.4,15.6 Z" fill="#f8efb8" stroke="#cbbd6c" stroke-width="1"/></svg>
<div class="t" style="left:83px;top:475.6px;font-size:12.8px;letter-spacing:0;color:#141414">Load Cases &amp; Combinations</div>
<svg style="left:64px;top:499px" width="6" height="10" viewBox="0 0 6 10"><path d="M0.7,0.7 L5,5 L0.7,9.3" fill="none" stroke="#8a8a8a" stroke-width="1.4"/></svg>
<svg style="left:82px;top:495px" width="20" height="18" viewBox="0 0 20 18"><path d="M5,1 V10" stroke="#5a86d0" stroke-width="2.4"/><path d="M1.2,8 L5,13.2 L8.8,8 Z" fill="#4a78c8"/><path d="M0,16.5 H19" stroke="#333" stroke-width="1.4"/></svg>
<div class="t" style="left:108px;top:498.6px;font-size:12.8px;letter-spacing:0;color:#141414">Load Cases</div>
<svg style="left:82px;top:518px" width="20" height="18" viewBox="0 0 20 18"><rect x="0.6" y="1.6" width="6" height="3.6" fill="#fff" stroke="#444" stroke-width="1"/><rect x="0.6" y="13" width="6" height="3.6" fill="#fff" stroke="#444" stroke-width="1"/><path d="M7,3.4 H9 Q12,3.4 12,7 M7,14.8 H9 Q12,14.8 12,11" fill="none" stroke="#333" stroke-width="1.2"/><path d="M10,6.5 L12,9 L14,6.5 M10,11.5 L12,9" fill="none" stroke="#333" stroke-width="1.1"/><rect x="13.5" y="6.8" width="5.5" height="4.6" fill="#20c040"/></svg>
<div class="t" style="left:108px;top:521.6px;font-size:12.8px;letter-spacing:0;color:#141414">Load Combinations</div>
<svg style="left:38px;top:545px" width="6" height="10" viewBox="0 0 6 10"><path d="M0.7,0.7 L5,5 L0.7,9.3" fill="none" stroke="#8a8a8a" stroke-width="1.4"/></svg>
<svg style="left:56.5px;top:540px" width="21" height="19.5" viewBox="0 0 20 19"><path d="M1.5,4 Q1.5,2 3.5,2 H8 L10,4 H17 Q18.5,4 18.5,5.5 V15.5 Q18.5,17 17,17 H3 Q1.5,17 1.5,15.5 Z" fill="#f6ecb0" stroke="#cbbd6c" stroke-width="1"/><path d="M2.2,6.2 H18" stroke="#e2d68a" stroke-width="0.8"/></svg>
<div class="t" style="left:83px;top:544.6px;font-size:12.8px;letter-spacing:0;color:#141414">Internal Forces</div>
<svg style="left:56.5px;top:563px" width="21" height="19.5" viewBox="0 0 20 19"><path d="M1.5,4 Q1.5,2 3.5,2 H8 L10,4 H17 Q18.5,4 18.5,5.5 V15.5 Q18.5,17 17,17 H3 Q1.5,17 1.5,15.5 Z" fill="#f6ecb0" stroke="#cbbd6c" stroke-width="1"/><path d="M2.2,6.2 H18" stroke="#e2d68a" stroke-width="0.8"/></svg>
<div class="t" style="left:83px;top:567.6px;font-size:12.8px;letter-spacing:0;color:#141414">Results</div>
<svg style="left:38px;top:591px" width="6" height="10" viewBox="0 0 6 10"><path d="M0.7,0.7 L5,5 L0.7,9.3" fill="none" stroke="#8a8a8a" stroke-width="1.4"/></svg>
<svg style="left:56.5px;top:586px" width="21" height="19.5" viewBox="0 0 20 19"><path d="M1.5,4 Q1.5,2 3.5,2 H8 L10,4 H17 Q18.5,4 18.5,5.5 V15.5 Q18.5,17 17,17 H3 Q1.5,17 1.5,15.5 Z" fill="#f6ecb0" stroke="#cbbd6c" stroke-width="1"/><path d="M2.2,6.2 H18" stroke="#e2d68a" stroke-width="0.8"/></svg>
<div class="t" style="left:83px;top:590.6px;font-size:12.8px;letter-spacing:0;color:#141414">Stresses</div>
<svg style="left:38px;top:614px" width="6" height="10" viewBox="0 0 6 10"><path d="M0.7,0.7 L5,5 L0.7,9.3" fill="none" stroke="#8a8a8a" stroke-width="1.4"/></svg>
<svg style="left:56.5px;top:609px" width="21" height="19.5" viewBox="0 0 20 19"><path d="M1.5,4 Q1.5,2 3.5,2 H8 L10,4 H17 Q18.5,4 18.5,5.5 V15.5 Q18.5,17 17,17 H3 Q1.5,17 1.5,15.5 Z" fill="#f6ecb0" stroke="#cbbd6c" stroke-width="1"/><path d="M2.2,6.2 H18" stroke="#e2d68a" stroke-width="0.8"/></svg>
<div class="t" style="left:83px;top:613.6px;font-size:12.8px;letter-spacing:0;color:#141414">Guide Objects</div>
<svg style="left:56.5px;top:632px" width="21" height="19.5" viewBox="0 0 20 19"><path d="M1.5,4 Q1.5,2 3.5,2 H8 L10,4 H17 Q18.5,4 18.5,5.5 V15.5 Q18.5,17 17,17 H3 Q1.5,17 1.5,15.5 Z" fill="#f6ecb0" stroke="#cbbd6c" stroke-width="1"/><path d="M2.2,6.2 H18" stroke="#e2d68a" stroke-width="0.8"/></svg>
<div class="t" style="left:83px;top:636.6px;font-size:12.8px;letter-spacing:0;color:#141414">Printout Reports</div>
<div class="abs" style="left:5px;top:1126px;width:376px;height:20px;background:#f0f0f0"></div>
<div class="abs" style="left:25px;top:1133.5px;width:322px;height:3px;border-radius:2px;background:#8b8b8b"></div>
<div class="abs" style="left:3px;top:1146px;width:379px;height:31px;background:#f7f7f9;border:1px solid #c9c9d6;border-top:1px solid #d6d6de"></div>
<div class="abs" style="left:4px;top:1146px;width:39px;height:30px;background:#fff"></div>
<div class="abs" style="left:43px;top:1146.5px;width:39px;height:27px;background:#efeff1;border:1px solid #dcdce0"></div>
<svg style="left:13px;top:1150px" width="22" height="22" viewBox="0 0 22 22"><rect x="6" y="1.5" width="14" height="3" fill="#3a6ad8"/><rect x="6" y="4" width="14" height="9" fill="#e8e8f0" stroke="#889" stroke-width="0.8"/><path d="M1,6 H6 L7.5,8 H13 V15 H1 Z" fill="#f0c020" stroke="#c89a10" stroke-width="0.8"/><path d="M5,15 Q10,10 19,13 Q18,17 20,19 Q13,16 12,21 Q10,17 5,15 Z" fill="#6aa0e0" stroke="#3a68b0" stroke-width="0.7"/><circle cx="5" cy="15" r="1.3" fill="#e02020"/><circle cx="19" cy="13" r="1.3" fill="#e02020"/><circle cx="12" cy="21" r="1.3" fill="#e02020"/></svg>
<svg style="left:54px;top:1153px" width="18" height="13" viewBox="0 0 18 13"><path d="M0.8,6.5 Q9,-2.5 17.2,6.5 Q9,15.5 0.8,6.5 Z" fill="#fff" stroke="#26268a" stroke-width="1.4"/><circle cx="9" cy="6.2" r="3.7" fill="#26268a"/><circle cx="9" cy="6.2" r="1.5" fill="#7a9ae0"/></svg>
<!-- canvas -->
<div class="abs" style="left:383px;top:98px;width:1215px;height:809px;background:#fafafa"></div>
<svg style="left:0;top:0" width="1600" height="1200" viewBox="0 0 1600 1200" shape-rendering="auto">
<defs>
<pattern id="hatch" width="8" height="8" patternUnits="userSpaceOnUse">
<rect width="8" height="8" fill="#2626a2"/>
<path d="M-1,5 L5,-1 M3,9 L9,3" stroke="#d6dede" stroke-width="0.85"/>
</pattern>
<clipPath id="cv"><rect x="383" y="98" width="1214" height="808"/></clipPath>
</defs>
<g clip-path="url(#cv)">
<rect x="527.15" y="98" width="1.15" height="809" fill="#2dbcbc"/>
<rect x="388" y="305.85" width="1209" height="1.15" fill="#2dbcbc"/>
<rect x="528" y="278" width="921" height="57" fill="url(#hatch)" stroke="#a8a8b0" stroke-width="1"/>
<rect x="960" y="335" width="57.5" height="575" fill="url(#hatch)" stroke="#a8a8b0" stroke-width="1"/>
<polygon points="920,335.5 959.5,335.5 959.5,374.5" fill="#b5432b"/>
<polygon points="1018,335.5 1057,335.5 1018,374.5" fill="#b5432b"/>
<path d="M528,306.2 H1449 M988.7,278 V907 M960,306 V335 M1017.5,306 V335 M960,335 H1017.5" stroke="#a9a9b4" stroke-width="1.1" fill="none"/>
<path d="M960,306.6 H1017" stroke="#111" stroke-width="1.2"/>
<rect x="412" y="191" width="1" height="1" fill="#000"/><rect x="412" y="306" width="1" height="1" fill="#000"/><rect x="412" y="421" width="1" height="1" fill="#000"/><rect x="412" y="536" width="1" height="1" fill="#000"/><rect x="412" y="652" width="1" height="1" fill="#000"/><rect x="412" y="767" width="1" height="1" fill="#000"/><rect x="412" y="882" width="1" height="1" fill="#000"/><rect x="528" y="191" width="1" height="1" fill="#000"/><rect x="528" y="306" width="1" height="1" fill="#000"/><rect x="528" y="421" width="1" height="1" fill="#000"/><rect x="528" y="536" width="1" height="1" fill="#000"/><rect x="528" y="652" width="1" height="1" fill="#000"/><rect x="528" y="767" width="1" height="1" fill="#000"/><rect x="528" y="882" width="1" height="1" fill="#000"/><rect x="643" y="191" width="1" height="1" fill="#000"/><rect x="643" y="306" width="1" height="1" fill="#000"/><rect x="643" y="421" width="1" height="1" fill="#000"/><rect x="643" y="536" width="1" height="1" fill="#000"/><rect x="643" y="652" width="1" height="1" fill="#000"/><rect x="643" y="767" width="1" height="1" fill="#000"/><rect x="643" y="882" width="1" height="1" fill="#000"/><rect x="758" y="191" width="1" height="1" fill="#000"/><rect x="758" y="306" width="1" height="1" fill="#000"/><rect x="758" y="421" width="1" height="1" fill="#000"/><rect x="758" y="536" width="1" height="1" fill="#000"/><rect x="758" y="652" width="1" height="1" fill="#000"/><rect x="758" y="767" width="1" height="1" fill="#000"/><rect x="758" y="882" width="1" height="1" fill="#000"/><rect x="873" y="191" width="1" height="1" fill="#000"/><rect x="873" y="306" width="1" height="1" fill="#000"/><rect x="873" y="421" width="1" height="1" fill="#000"/><rect x="873" y="536" width="1" height="1" fill="#000"/><rect x="873" y="652" width="1" height="1" fill="#000"/><rect x="873" y="767" width="1" height="1" fill="#000"/><rect x="873" y="882" width="1" height="1" fill="#000"/><rect x="988" y="191" width="1" height="1" fill="#000"/><rect x="988" y="306" width="1" height="1" fill="#000"/><rect x="988" y="421" width="1" height="1" fill="#000"/><rect x="988" y="536" width="1" height="1" fill="#000"/><rect x="988" y="652" width="1" height="1" fill="#000"/><rect x="988" y="767" width="1" height="1" fill="#000"/><rect x="988" y="882" width="1" height="1" fill="#000"/><rect x="1104" y="191" width="1" height="1" fill="#000"/><rect x="1104" y="306" width="1" height="1" fill="#000"/><rect x="1104" y="421" width="1" height="1" fill="#000"/><rect x="1104" y="536" width="1" height="1" fill="#000"/><rect x="1104" y="652" width="1" height="1" fill="#000"/><rect x="1104" y="767" width="1" height="1" fill="#000"/><rect x="1104" y="882" width="1" height="1" fill="#000"/><rect x="1219" y="191" width="1" height="1" fill="#000"/><rect x="1219" y="306" width="1" height="1" fill="#000"/><rect x="1219" y="421" width="1" height="1" fill="#000"/><rect x="1219" y="536" width="1" height="1" fill="#000"/><rect x="1219" y="652" width="1" height="1" fill="#000"/><rect x="1219" y="767" width="1" height="1" fill="#000"/><rect x="1219" y="882" width="1" height="1" fill="#000"/><rect x="1334" y="191" width="1" height="1" fill="#000"/><rect x="1334" y="306" width="1" height="1" fill="#000"/><rect x="1334" y="421" width="1" height="1" fill="#000"/><rect x="1334" y="536" width="1" height="1" fill="#000"/><rect x="1334" y="652" width="1" height="1" fill="#000"/><rect x="1334" y="767" width="1" height="1" fill="#000"/><rect x="1334" y="882" width="1" height="1" fill="#000"/><rect x="1449" y="191" width="1" height="1" fill="#000"/><rect x="1449" y="306" width="1" height="1" fill="#000"/><rect x="1449" y="421" width="1" height="1" fill="#000"/><rect x="1449" y="536" width="1" height="1" fill="#000"/><rect x="1449" y="652" width="1" height="1" fill="#000"/><rect x="1449" y="767" width="1" height="1" fill="#000"/><rect x="1449" y="882" width="1" height="1" fill="#000"/><rect x="1564" y="191" width="1" height="1" fill="#000"/><rect x="1564" y="306" width="1" height="1" fill="#000"/><rect x="1564" y="421" width="1" height="1" fill="#000"/><rect x="1564" y="536" width="1" height="1" fill="#000"/><rect x="1564" y="652" width="1" height="1" fill="#000"/><rect x="1564" y="767" width="1" height="1" fill="#000"/><rect x="1564" y="882" width="1" height="1" fill="#000"/>
<rect x="755.4" y="275.0" width="6" height="6" fill="#12c212"/>
<rect x="985.7" y="275.0" width="6" height="6" fill="#12c212"/>
<rect x="1216.2" y="275.0" width="6" height="6" fill="#12c212"/>
<rect x="741.0" y="332.0" width="6" height="6" fill="#12c212"/>
<rect x="755.4" y="332.0" width="6" height="6" fill="#12c212"/>
<rect x="1216.2" y="332.0" width="6" height="6" fill="#12c212"/>
<rect x="1230.4" y="332.0" width="6" height="6" fill="#12c212"/>
<rect x="957.0" y="303.0" width="6" height="6" fill="#12c212"/>
<rect x="1014.0" y="303.0" width="6" height="6" fill="#12c212"/>
<rect x="985.5" y="332.0" width="6" height="6" fill="#12c212"/>
<rect x="985.5" y="581.0" width="6" height="6" fill="#12c212"/>
<rect x="957.0" y="822.0" width="6" height="6" fill="#12c212"/>
<rect x="957.0" y="835.0" width="6" height="6" fill="#12c212"/>
<rect x="1014.0" y="822.0" width="6" height="6" fill="#12c212"/>
<rect x="1014.0" y="835.0" width="6" height="6" fill="#12c212"/>
<rect x="524.5" y="274.5" width="7" height="7" fill="#16b516"/><rect x="526" y="276" width="4" height="4" fill="#ff0a0a"/>
<rect x="1445.5" y="274.5" width="7" height="7" fill="#16b516"/><rect x="1447" y="276" width="4" height="4" fill="#ff0a0a"/>
<rect x="1445.5" y="302.5" width="7" height="7" fill="#16b516"/><rect x="1447" y="304" width="4" height="4" fill="#ff0a0a"/>
<rect x="1445.5" y="331.5" width="7" height="7" fill="#16b516"/><rect x="1447" y="333" width="4" height="4" fill="#ff0a0a"/>
<rect x="956.5" y="331.5" width="7" height="7" fill="#16b516"/><rect x="958" y="333" width="4" height="4" fill="#ff0a0a"/>
<rect x="1013.5" y="331.5" width="7" height="7" fill="#16b516"/><rect x="1015" y="333" width="4" height="4" fill="#ff0a0a"/>
<rect x="524.5" y="331.5" width="7" height="7" fill="#16b516"/><rect x="526" y="333" width="4" height="4" fill="#ff0a0a"/>
<circle cx="988.5" cy="306" r="2.6" fill="#ff1010"/><circle cx="988.5" cy="306" r="0.8" fill="#200"/>
<path d="M528,306 V338" stroke="#0a0aff" stroke-width="2.4"/><polygon points="524.4,334 531.6,334 528,346" fill="#1010f0"/><path d="M528,306 H558" stroke="#10e020" stroke-width="2.4"/><polygon points="556,302.6 556,309.4 566,306" fill="#10e020"/><circle cx="528" cy="306" r="3.6" fill="#f2e21a"/><circle cx="527.2" cy="305.2" r="1.6" fill="#fff58a"/><text x="577" y="310.5" font-family="Liberation Sans, sans-serif" font-size="12.5" fill="#10e020" text-anchor="middle">Y</text><text x="528" y="360.5" font-family="Liberation Sans, sans-serif" font-size="12.5" fill="#1515f0" text-anchor="middle">Z</text>
<path d="M447,846 V878" stroke="#0a0aff" stroke-width="2.4"/><polygon points="443.4,874 450.6,874 447,886" fill="#1010f0"/><path d="M447,846 H479" stroke="#10e020" stroke-width="2.4"/><polygon points="477,842.6 477,849.4 487,846" fill="#10e020"/><circle cx="447" cy="846" r="3.6" fill="#f2e21a"/><circle cx="446.2" cy="845.2" r="1.6" fill="#fff58a"/><text x="496" y="850.5" font-family="Liberation Sans, sans-serif" font-size="12.5" fill="#10e020" text-anchor="middle">Y</text><text x="447" y="900.5" font-family="Liberation Sans, sans-serif" font-size="12.5" fill="#1515f0" text-anchor="middle">Z</text>
</g>
<text x="392.3" y="117.7" font-family="Liberation Sans, sans-serif" font-size="15" fill="#222" textLength="44" lengthAdjust="spacingAndGlyphs">LC1 - F</text>
</svg>
<!-- materials -->
<div class="abs" style="left:383px;top:907px;width:1215px;height:273px;background:#f8f8fa"></div>
<div class="abs" style="left:386px;top:911px;width:1212px;height:267px;background:#f9f9fb"></div>
<div class="abs" style="left:387px;top:911px;width:1210px;height:25px;background:#d9e5f4"></div>
<div class="t" style="left:394px;top:916px;font-size:15.3px;font-weight:bold;color:#2e2e2e">Materials</div>
<svg style="left:1553px;top:918px" width="12" height="12" viewBox="0 0 12 12"><path d="M3.5,3.2 V1.2 H10.6 V7.6 H8.6" fill="none" stroke="#333" stroke-width="1.5"/><rect x="1" y="4" width="7.4" height="6.6" fill="none" stroke="#333" stroke-width="1.5"/><path d="M1,4.6 H8.4" stroke="#333" stroke-width="2"/></svg>
<svg style="left:1579px;top:919px" width="11" height="11" viewBox="0 0 11 11"><path d="M1,1 L10,10 M10,1 L1,10" stroke="#2a2a2a" stroke-width="2"/></svg>
<div class="t" style="left:395px;top:943.5px;font-size:12.8px;color:#111">Go To</div>
<div class="t" style="left:446px;top:943.5px;font-size:12.8px;color:#111">Edit</div>
<div class="t" style="left:484px;top:943.5px;font-size:12.8px;color:#111">Selection</div>
<div class="t" style="left:552px;top:943.5px;font-size:12.8px;color:#111">View</div>
<div class="t" style="left:595px;top:943.5px;font-size:12.8px;color:#111">Settings</div>
<div class="abs" style="left:388px;top:960px;width:1209px;height:1px;background:#e4e5ea"></div>
<div class="abs" style="left:389px;top:965px;width:290px;height:25px;background:#e7e9f5"></div>
<svg style="left:394px;top:968px" width="19" height="18" viewBox="0 0 19 18"><rect x="0.6" y="0.6" width="17.8" height="16.8" fill="#8a8a8a" stroke="#555" stroke-width="1.2"/><rect x="1" y="1" width="17" height="3" fill="#3a4ea0"/><path d="M1,8 H11 M1,12 H8 M7,4 V12" stroke="#c4c4c4" stroke-width="1"/><path d="M4,15.5 L16,4.5 V15.5 Z" fill="#88e888" stroke="#2aa02a" stroke-width="1"/><path d="M10.5,13 L13.5,10 V13 Z" fill="#8a8a8a"/></svg>
<div class="t" style="left:418px;top:972px;font-size:12.8px;color:#111">Basic Objects</div>
<svg style="left:624px;top:974px" width="11" height="7" viewBox="0 0 11 7"><path d="M0.7,0.7 L5.5,5.5 L10.3,0.7" fill="none" stroke="#333" stroke-width="1.3"/></svg>
<div class="abs" style="left:640px;top:965px;width:19px;height:25px;background:#d3d3d3"></div>
<svg style="left:646.5px;top:973px" width="6" height="9" viewBox="0 0 6 9"><path d="M5.5,0 V9 L0,4.5 Z" fill="#2a2a2a"/></svg>
<svg style="left:667px;top:973px" width="6" height="9" viewBox="0 0 6 9"><path d="M0,0 V9 L5.5,4.5 Z" fill="#000"/></svg>
<div class="abs" style="left:683px;top:965px;width:1px;height:25px;background:#8e8e8e"></div>
<div class="abs" style="left:688px;top:965px;width:1px;height:25px;background:#dedee4"></div>
<div class="abs" style="left:691px;top:963px;width:30px;height:28px;background:#cfe6fb;border:1px solid #9ccaf2;border-radius:3px"></div>
<div class="abs" style="left:722px;top:963px;width:30px;height:28px;background:#cfe6fb;border:1px solid #9ccaf2;border-radius:3px"></div>
<svg style="left:700px;top:966px" width="16" height="22" viewBox="0 0 16 22"><rect x="2" y="1" width="8.5" height="5.5" rx="0.8" fill="#dcdcdc" stroke="#444" stroke-width="1.2"/><path d="M14,20 Q17,10 8.5,8" fill="none" stroke="#2a55a8" stroke-width="1.8"/><path d="M6,7.5 L11.5,5 L11,11.5 Z" fill="#2a55a8"/></svg>
<svg style="left:727px;top:966px" width="16" height="22" viewBox="0 0 16 22"><rect x="6" y="1" width="8.5" height="5.5" rx="0.8" fill="#dcdcdc" stroke="#444" stroke-width="1.2"/><path d="M8,7 Q1,11 5.5,18" fill="none" stroke="#2a55a8" stroke-width="1.8"/><path d="M8.5,21 L2,19 L7.5,14.5 Z" fill="#2a55a8"/></svg>
<div class="abs" style="left:756px;top:965px;width:1px;height:25px;background:#8e8e8e"></div>
<svg style="left:765px;top:967px" width="24" height="22" viewBox="0 0 24 22"><rect x="0.7" y="0.7" width="22.6" height="20.6" fill="#e6e6e6" stroke="#9a9a9a" stroke-width="1.4"/><path d="M1,4 H23 M1,7.5 H23 M1,11 H23 M1,14.5 H23 M1,18 H23" stroke="#8a8a8a" stroke-width="1.5"/><path d="M8,1 V21 M16,1 V21" stroke="#e6e6e6" stroke-width="1.2"/></svg>
<svg style="left:796px;top:967px" width="24" height="22" viewBox="0 0 24 22"><rect x="0.7" y="9" width="22.6" height="12.3" fill="#f0f0f0" stroke="#9a9a9a" stroke-width="1.3"/><path d="M1,13 H23 M1,17 H23 M8,9 V21 M16,9 V21" stroke="#b4b4b4" stroke-width="1"/><path d="M5,2 L19,5.5" stroke="#aaa" stroke-width="1.2"/><circle cx="5" cy="2" r="1.6" fill="#aaa"/><circle cx="19" cy="5.5" r="1.6" fill="#aaa"/></svg>
<svg style="left:827px;top:967px" width="24" height="22" viewBox="0 0 24 22"><rect x="0.7" y="0.7" width="22.6" height="20.6" fill="#dcdcdc" stroke="#9a9a9a" stroke-width="1.4"/><path d="M1,4.5 H23 M1,8 H23 M1,11.5 H23 M1,15 H23 M1,18.5 H23 M8,1 V21 M16,1 V21" stroke="#b4b4b4" stroke-width="0.9"/><path d="M12,4 V18 M5,11 H19" stroke="#a2a2a2" stroke-width="4.5"/></svg>
<svg style="left:858px;top:967px" width="24" height="22" viewBox="0 0 24 22"><rect x="0.7" y="0.7" width="22.6" height="20.6" fill="#dcdcdc" stroke="#9a9a9a" stroke-width="1.4"/><path d="M1,4.5 H23 M1,8 H23 M1,11.5 H23 M1,15 H23 M1,18.5 H23 M8,1 V21 M16,1 V21" stroke="#b4b4b4" stroke-width="0.9"/><path d="M6.5,5.5 L17.5,16.5 M17.5,5.5 L6.5,16.5" stroke="#a2a2a2" stroke-width="4.5"/></svg>
<svg style="left:889px;top:967px" width="24" height="22" viewBox="0 0 24 22"><rect x="0.7" y="0.7" width="22.6" height="20.6" fill="#dcdcdc" stroke="#9a9a9a" stroke-width="1.4"/><path d="M1,4.5 H23 M1,8 H23 M1,11.5 H23 M1,15 H23 M1,18.5 H23 M8,1 V21 M16,1 V21" stroke="#b4b4b4" stroke-width="0.9"/><circle cx="12" cy="6.5" r="3" fill="#a2a2a2"/><circle cx="12" cy="15.5" r="3" fill="#a2a2a2"/></svg>
<div class="abs" style="left:919px;top:965px;width:1px;height:25px;background:#8e8e8e"></div>
<svg style="left:928px;top:967px" width="24" height="22" viewBox="0 0 24 22"><rect x="0.7" y="0.7" width="22.6" height="20.6" fill="#d4d4d4" stroke="#9a9a9a" stroke-width="1.4"/><path d="M1,4.5 H23 M1,8 H23 M1,11.5 H23 M1,15 H23 M1,18.5 H23 M8,1 V21 M16,1 V21" stroke="#b4b4b4" stroke-width="0.9"/><path d="M4,3.5 L20,18.5 M20,3.5 L4,18.5" stroke="#8c8c8c" stroke-width="4.2"/></svg>
<div class="abs" style="left:958px;top:965px;width:1px;height:25px;background:#8e8e8e"></div>
<svg style="left:967px;top:966px" width="23" height="24" viewBox="0 0 23 24"><rect x="0.5" y="0.5" width="9" height="5" fill="#fff" stroke="#c4c4c4" stroke-width="1"/><rect x="0.5" y="8" width="11" height="6" fill="#8a8a8a"/><rect x="0.5" y="16.5" width="9" height="5" fill="#a4a4a4" /><path d="M13,10 Q21,9 19.5,16 Q18.5,20 13,19" fill="none" stroke="#8a8a8a" stroke-width="2"/><path d="M15,16 L11.5,19.5 L15.5,22 Z" fill="#8a8a8a"/></svg>
<svg style="left:998px;top:966px" width="23" height="24" viewBox="0 0 23 24"><rect x="3" y="0.5" width="8" height="4.5" fill="#fff" stroke="#c4c4c4" stroke-width="1"/><rect x="0.5" y="8" width="11" height="6" fill="#9a9a9a"/><rect x="3" y="17" width="8" height="4.5" fill="#fff" stroke="#c4c4c4" stroke-width="1"/><path d="M12.5,6 L22,16.5 M22,6 L12.5,16.5" stroke="#9a9a9a" stroke-width="2.3"/></svg>
<svg style="left:1029px;top:966px" width="23" height="24" viewBox="0 0 23 24"><path d="M9,3 H4 V20 H9 M12,9 H21 M12,14 H21" fill="none" stroke="#c8c8c8" stroke-width="1.3"/><path d="M5,11.5 H14" stroke="#9a9a9a" stroke-width="2.6"/><path d="M0,11.5 L6,7 V16 Z" fill="#9a9a9a"/></svg>
<svg style="left:1060px;top:966px" width="23" height="24" viewBox="0 0 23 24"><path d="M1,3.5 H9 V8 H1 M1,10 H9 V14 H1 M1,16 H9 V20.5 H1" fill="none" stroke="#c8c8c8" stroke-width="1.3"/><path d="M9,12 H18" stroke="#9a9a9a" stroke-width="2.6"/><path d="M23,12 L16.5,7.5 V16.5 Z" fill="#9a9a9a"/></svg>
<div class="abs" style="left:1090px;top:965px;width:1px;height:25px;background:#8e8e8e"></div>
<svg style="left:1099px;top:967px" width="24" height="22" viewBox="0 0 24 22"><rect x="0.7" y="0.7" width="22.6" height="20.6" fill="#fafafa" stroke="#555" stroke-width="1.4"/><rect x="1.4" y="1.4" width="21.2" height="8" fill="#b4b4ec"/><path d="M1,4 H23 M1,6.8 H23 M8,1 V9.5 M16,1 V9.5" stroke="#8a8acc" stroke-width="0.8"/></svg>
<div class="abs" style="left:1129px;top:965px;width:1px;height:25px;background:#8e8e8e"></div>
<svg style="left:1138px;top:965px" width="24" height="25" viewBox="0 0 24 25"><rect x="10.5" y="1" width="12" height="9" fill="#e4e4e4" stroke="#666" stroke-width="1.2"/><rect x="10.5" y="1" width="12" height="3" fill="#3a4ea0"/><text x="0" y="21.5" font-family="Liberation Serif, serif" font-style="italic" font-weight="bold" font-size="14" fill="#111">ab</text><path d="M15.5,17 H21 M15.5,20.5 H21" stroke="#111" stroke-width="1.4"/></svg>
<svg style="left:1172px;top:965px" width="24" height="25" viewBox="0 0 24 25"><text x="0" y="20" font-family="Liberation Serif, serif" font-style="italic" font-weight="normal" font-size="21" fill="#8e8e8e" textLength="19" lengthAdjust="spacingAndGlyphs">fx</text></svg>
<svg style="left:1200px;top:965px" width="24" height="25" viewBox="0 0 24 25"><text x="0" y="20" font-family="Liberation Serif, serif" font-style="italic" font-weight="normal" font-size="21" fill="#8e8e8e" textLength="19" lengthAdjust="spacingAndGlyphs">fx</text><path d="M13,1.5 L22,10 M22,1.5 L13,10" stroke="#9a9a9a" stroke-width="2.8"/></svg>
<svg style="left:1231px;top:965px" width="24" height="25" viewBox="0 0 24 25"><text x="0" y="20" font-family="Liberation Serif, serif" font-style="italic" font-weight="bold" font-size="21" fill="#0a0a0a" textLength="19" lengthAdjust="spacingAndGlyphs">fx</text><path d="M10.5,5.5 Q16.5,-1 22.5,5.5 Q16.5,11.5 10.5,5.5 Z" fill="#fff" stroke="#26268a" stroke-width="1.2"/><circle cx="16.5" cy="5.2" r="2.7" fill="#26268a"/></svg>
<div class="abs" style="left:1261px;top:965px;width:1px;height:25px;background:#8e8e8e"></div>
<svg style="left:1270px;top:966px" width="24" height="24" viewBox="0 0 24 24"><path d="M5,1 H18 L22.5,5.5 V22.5 H5 Z" fill="#fff" stroke="#555" stroke-width="1.2"/><rect x="10" y="5" width="11" height="12" fill="#e8f4e8" stroke="#2a8a4a" stroke-width="0.9"/><path d="M10,9 H21 M10,13 H21 M14,5 V17 M17.5,5 V17" stroke="#2a8a4a" stroke-width="0.8"/><rect x="0" y="4" width="11" height="12" fill="#1e7a3e"/><path d="M2.8,6.5 L8.2,13.5 M8.2,6.5 L2.8,13.5" stroke="#fff" stroke-width="1.7"/><path d="M11,18.5 H18 L14.5,22 Z" fill="#2a9a4a"/></svg>
<div class="abs" style="left:1300px;top:965px;width:1px;height:25px;background:#8e8e8e"></div>
<svg style="left:1309px;top:966px" width="24" height="23" viewBox="0 0 24 23"><rect x="1" y="9" width="21.5" height="13" fill="#e4e4ec" stroke="#555" stroke-width="1.3"/><rect x="1" y="7" width="21.5" height="4" fill="#4a4a4a"/><path d="M4,14.5 H10 M13,14.5 H20 M4,18 H10 M13,18 H20" stroke="#666" stroke-width="1.8"/><path d="M6,6.5 Q8,2.5 12,3 L18,1.5 L21,5.5 L16,9 Q11,10 8,8.5 Z" fill="#e8b894" stroke="#9c6c50" stroke-width="0.7"/><path d="M16.5,1 L22,0.3 L23,6.5 L19.5,7 Z" fill="#4a7ed0"/></svg>
<div class="abs" style="left:1337px;top:965px;width:1px;height:25px;background:#dedee4"></div>
<svg style="left:1342px;top:966px" width="25" height="24" viewBox="0 0 25 24"><rect x="0.5" y="0.5" width="23" height="6" fill="#7cd074"/><path d="M3,3 V6.5 M6.3,4 V6.5 M9.6,3 V6.5 M12.9,4 V6.5 M16.2,3 V6.5 M19.5,4 V6.5" stroke="#c8f0c8" stroke-width="0.8"/><text x="0" y="20.5" font-family="Liberation Sans, sans-serif" font-size="13.5" font-weight="bold" fill="#111" textLength="10" lengthAdjust="spacingAndGlyphs">0.</text><text x="10" y="20.5" font-family="Liberation Sans, sans-serif" font-size="13.5" fill="#3a6ad0" textLength="14" lengthAdjust="spacingAndGlyphs">00</text><path d="M9.5,22.8 H23.5" stroke="#3a6ad0" stroke-width="1"/></svg>
<div class="abs" style="left:1373px;top:965px;width:1px;height:25px;background:#8e8e8e"></div>
<svg style="left:1384px;top:967px" width="21" height="22" viewBox="0 0 21 22"><path d="M10.5,0.5 A9.5,9.5 0 1 1 5.5,17.8 L0.5,21 L2.8,15 A9.5,9.5 0 0 1 10.5,0.5 Z" fill="#4a4a4a"/><text x="5.8" y="15.5" font-family="Liberation Sans, sans-serif" font-weight="bold" font-size="14.5" fill="#f9f9fb">?</text></svg>
<div class="abs" style="left:1409px;top:965px;width:1px;height:25px;background:#dedee4"></div>
<div class="abs" style="left:388px;top:993px;width:1021px;height:1px;background:#e4e5ea"></div>
<div class="abs" style="left:388px;top:995px;width:1209px;height:155px;background:#f0f0f0"></div>
<div class="abs" style="left:388px;top:995px;width:1187.5px;height:13px;background:#e3e3e3"></div>
<div class="abs" style="left:388px;top:1008px;width:1187.5px;height:40px;background:#f0f0f0"></div>
<div class="abs" style="left:388px;top:1048px;width:74px;height:81px;background:#e3e3e3"></div>
<div class="abs" style="left:462px;top:1048px;width:1113.5px;height:81px;background:#fff"></div>
<div class="abs" style="left:951px;top:1048px;width:624.5px;height:20px;background:#fbfaf5"></div>
<div class="abs" style="left:1200px;top:1068px;width:125px;height:61px;background:#fbf9f2"></div>
<div class="abs" style="left:461.5px;top:995px;width:1px;height:134px;background:#d2d2d2"></div>
<div class="abs" style="left:774.5px;top:995px;width:1px;height:134px;background:#d2d2d2"></div>
<div class="abs" style="left:950.0px;top:995px;width:1px;height:134px;background:#d2d2d2"></div>
<div class="abs" style="left:1074.5px;top:995px;width:1px;height:134px;background:#d2d2d2"></div>
<div class="abs" style="left:1199.5px;top:995px;width:1px;height:134px;background:#d2d2d2"></div>
<div class="abs" style="left:1324.5px;top:995px;width:1px;height:134px;background:#d2d2d2"></div>
<div class="abs" style="left:1449.5px;top:995px;width:1px;height:134px;background:#d2d2d2"></div>
<div class="abs" style="left:1575.0px;top:995px;width:1px;height:134px;background:#d2d2d2"></div>
<div class="abs" style="left:461.5px;top:995px;width:1px;height:13px;background:#f2f2f2"></div>
<div class="abs" style="left:774.5px;top:995px;width:1px;height:13px;background:#f2f2f2"></div>
<div class="abs" style="left:950.0px;top:995px;width:1px;height:13px;background:#f2f2f2"></div>
<div class="abs" style="left:1074.5px;top:995px;width:1px;height:13px;background:#f2f2f2"></div>
<div class="abs" style="left:1199.5px;top:995px;width:1px;height:13px;background:#f2f2f2"></div>
<div class="abs" style="left:1324.5px;top:995px;width:1px;height:13px;background:#f2f2f2"></div>
<div class="abs" style="left:1449.5px;top:995px;width:1px;height:13px;background:#f2f2f2"></div>
<div class="abs" style="left:388px;top:1007.5px;width:1187.5px;height:1px;background:#f4f4f4"></div>
<div class="abs" style="left:388px;top:1047.5px;width:1187.5px;height:1px;background:#d6d6d6"></div>
<div class="abs" style="left:388px;top:1067.5px;width:1187.5px;height:1px;background:#d6d6d6"></div>
<div class="abs" style="left:388px;top:1087.5px;width:1187.5px;height:1px;background:#d6d6d6"></div>
<div class="abs" style="left:388px;top:1107.5px;width:1187.5px;height:1px;background:#d6d6d6"></div>
<div class="abs" style="left:388px;top:1128.0px;width:1187.5px;height:1px;background:#d6d6d6"></div>
<div class="t" style="left:325px;width:200px;text-align:center;top:1016px;font-size:12.8px;color:#111">Material</div>
<div class="t" style="left:325px;width:200px;text-align:center;top:1033px;font-size:12.8px;color:#111">No.</div>
<div class="t" style="left:518.5px;width:200px;text-align:center;top:1033px;font-size:12.8px;color:#111">Material Name</div>
<div class="t" style="left:763px;width:200px;text-align:center;top:1016px;font-size:12.8px;color:#111">Material</div>
<div class="t" style="left:763px;width:200px;text-align:center;top:1033px;font-size:12.8px;color:#111">Type</div>
<div class="t" style="left:913px;width:200px;text-align:center;top:1012.8px;font-size:12.8px;color:#111">Modulus of Elast.</div>
<div class="t" style="left:913px;width:200px;text-align:center;top:1032.8px;font-size:12.8px;color:#111">E [N/mm<span style="font-size:10.5px;position:relative;top:-3px">2</span>]</div>
<div class="t" style="left:1038px;width:200px;text-align:center;top:1012.8px;font-size:12.8px;color:#111">Shear Modulus</div>
<div class="t" style="left:1038px;width:200px;text-align:center;top:1032.8px;font-size:12.8px;color:#111">G [N/mm<span style="font-size:10.5px;position:relative;top:-3px">2</span>]</div>
<div class="t" style="left:1163px;width:200px;text-align:center;top:1012.8px;font-size:12.8px;color:#111">Poisson's Ratio</div>
<div class="t" style="left:1163px;width:200px;text-align:center;top:1032.8px;font-size:12.8px;color:#111">ν [--]</div>
<div class="t" style="left:1288px;width:200px;text-align:center;top:1012.8px;font-size:12.8px;color:#111">Specific Weight</div>
<div class="t" style="left:1288px;width:200px;text-align:center;top:1032.8px;font-size:12.8px;color:#111">γ [kN/m<span style="font-size:10.5px;position:relative;top:-3px">3</span>]</div>
<div class="t" style="left:1413px;width:200px;text-align:center;top:1012.8px;font-size:12.8px;color:#111">Mass Density</div>
<div class="t" style="left:1413px;width:200px;text-align:center;top:1032.8px;font-size:12.8px;color:#111">ρ [kg/m<span style="font-size:10.5px;position:relative;top:-3px">3</span>]</div>
<div class="t" style="left:325px;width:200px;text-align:center;top:1053px;font-size:12.8px;color:#111">1</div>
<div class="t" style="left:325px;width:200px;text-align:center;top:1073px;font-size:12.8px;color:#111">2</div>
<div class="t" style="left:325px;width:200px;text-align:center;top:1093px;font-size:12.8px;color:#111">3</div>
<div class="t" style="left:325px;width:200px;text-align:center;top:1113px;font-size:12.8px;color:#111">4</div>
<div class="abs" style="left:464px;top:1049px;width:310px;height:19px;border:1px dotted #111"></div>
<div class="abs" style="left:467px;top:1051.5px;width:14px;height:14px;background:#c6fafa"></div>
<div class="t" style="left:487px;top:1053.5px;font-size:12.4px;color:#111">S235JR</div>
<div class="abs" style="left:780px;top:1051px;width:14px;height:14px;background:#e8742c"></div>
<div class="t" style="left:800px;top:1053.5px;font-size:12.4px;color:#111">Steel</div>
<div class="t" style="left:951px;width:120px;text-align:right;top:1053.5px;font-size:12.4px;color:#111">210000.0</div>
<div class="t" style="left:1076px;width:120px;text-align:right;top:1053.5px;font-size:12.4px;color:#111">80769.2</div>
<div class="t" style="left:1201px;width:120px;text-align:right;top:1053.5px;font-size:12.4px;color:#111">0.300</div>
<div class="t" style="left:1326px;width:120px;text-align:right;top:1053.5px;font-size:12.4px;color:#111">78.50</div>
<div class="t" style="left:1451px;width:120px;text-align:right;top:1053.5px;font-size:12.4px;color:#111">7850.00</div>
<div class="abs" style="left:1585.5px;top:1017px;width:3px;height:50px;border-radius:2px;background:#8b8b8b"></div>
<div class="abs" style="left:409px;top:1137.5px;width:916px;height:3px;border-radius:2px;background:#858585"></div>
<div class="abs" style="left:388px;top:1149.5px;width:1209px;height:28.5px;background:#f9f9fb;border-top:1px solid #d4d4dc"></div>
<div class="abs" style="left:540px;top:1150px;width:71px;height:27px;background:#fff;border:1px solid #c9c9d2;border-top:none"></div>
<div class="t" style="left:540px;width:71px;text-align:center;top:1158.6px;font-size:12.8px;color:#111">Materials</div>
<div class="abs" style="left:611.5px;top:1150.5px;width:61.5px;height:24.5px;background:#f0f0f3;border:1px solid #cdcdd6;border-top:none"></div>
<div class="t" style="left:611.5px;width:61.5px;text-align:center;top:1157.7px;font-size:12.8px;color:#111">Sections</div>
<div class="abs" style="left:674px;top:1150.5px;width:61px;height:24.5px;background:#f0f0f3;border:1px solid #cdcdd6;border-top:none"></div>
<div class="t" style="left:674px;width:61px;text-align:center;top:1157.7px;font-size:12.8px;color:#111">Points</div>
<div class="abs" style="left:736px;top:1150.5px;width:60px;height:24.5px;background:#f0f0f3;border:1px solid #cdcdd6;border-top:none"></div>
<div class="t" style="left:736px;width:60px;text-align:center;top:1157.7px;font-size:12.8px;color:#111">Lines</div>
<div class="abs" style="left:797px;top:1150.5px;width:60px;height:24.5px;background:#f0f0f3;border:1px solid #cdcdd6;border-top:none"></div>
<div class="t" style="left:797px;width:60px;text-align:center;top:1157.7px;font-size:12.8px;color:#111">Parts</div>
<div class="abs" style="left:858px;top:1150.5px;width:71px;height:24.5px;background:#f0f0f3;border:1px solid #cdcdd6;border-top:none"></div>
<div class="t" style="left:858px;width:71px;text-align:center;top:1157.7px;font-size:12.8px;color:#111">Openings</div>
<div class="abs" style="left:930px;top:1150.5px;width:66px;height:24.5px;background:#f0f0f3;border:1px solid #cdcdd6;border-top:none"></div>
<div class="t" style="left:930px;width:66px;text-align:center;top:1157.7px;font-size:12.8px;color:#111">Elements</div>
<div class="abs" style="left:997.5px;top:1150.5px;width:60.0px;height:24.5px;background:#f0f0f3;border:1px solid #cdcdd6;border-top:none"></div>
<div class="t" style="left:997.5px;width:60.0px;text-align:center;top:1157.7px;font-size:12.8px;color:#111">Welds</div>
<div class="abs" style="left:1058.5px;top:1150.5px;width:88.5px;height:24.5px;background:#f0f0f3;border:1px solid #cdcdd6;border-top:none"></div>
<div class="t" style="left:1058.5px;width:88.5px;text-align:center;top:1157.7px;font-size:12.8px;color:#111">Stress Points</div>
<div class="abs" style="left:1148.5px;top:1150.5px;width:69.0px;height:24.5px;background:#f0f0f3;border:1px solid #cdcdd6;border-top:none"></div>
<div class="t" style="left:1148.5px;width:69.0px;text-align:center;top:1157.7px;font-size:12.8px;color:#111">Formulas</div>
<svg style="left:394px;top:1158px" width="9" height="10" viewBox="0 0 9 10"><path d="M1,0 V10" stroke="#7a7a7a" stroke-width="1.6"/><path d="M8.5,0.5 V9.5 L2.5,5 Z" fill="#7a7a7a"/></svg>
<svg style="left:416px;top:1158px" width="7" height="10" viewBox="0 0 7 10"><path d="M6.5,0.5 V9.5 L0.5,5 Z" fill="#7a7a7a"/></svg>
<div class="t" style="left:442px;top:1158.8px;font-size:13px;color:#111">1 of 10</div>
<svg style="left:504px;top:1158px" width="7" height="10" viewBox="0 0 7 10"><path d="M0.5,0.5 V9.5 L6.5,5 Z" fill="#333"/></svg>
<svg style="left:524px;top:1158px" width="9" height="10" viewBox="0 0 9 10"><path d="M8,0 V10" stroke="#333" stroke-width="1.6"/><path d="M0.5,0.5 V9.5 L6.5,5 Z" fill="#333"/></svg>
<!-- statusbar -->
<div class="abs" style="left:2px;top:1177.5px;width:1596.5px;height:22.5px;background:linear-gradient(180deg,#f0f1f9,#e9ebf6 60%)"></div>
<div class="t" style="left:7px;top:1183.7px;font-size:13px;letter-spacing:0.12px;color:#111">Sets new fillet weld via dialog box.</div>
<div class="abs" style="left:1004px;top:1179px;width:1px;height:21px;background:#d6d8e6"></div>
<div class="abs" style="left:1136px;top:1179px;width:1px;height:21px;background:#d6d8e6"></div>
<div class="abs" style="left:1391px;top:1179px;width:1px;height:21px;background:#d6d8e6"></div>
<div class="abs" style="left:1485px;top:1179px;width:1px;height:21px;background:#d6d8e6"></div>
<div class="abs" style="left:1578px;top:1179px;width:1px;height:21px;background:#d6d8e6"></div>
<div class="t" style="left:1140px;top:1183.7px;font-size:12.8px;color:#111">CS: Global YZ</div>
<svg style="left:1583px;top:1186px" width="12" height="12" viewBox="0 0 12 12"><rect x="9" y="0" width="2" height="2" fill="#a8a8b4"/><rect x="5" y="4" width="2" height="2" fill="#a8a8b4"/><rect x="9" y="4" width="2" height="2" fill="#a8a8b4"/><rect x="1" y="8" width="2" height="2" fill="#a8a8b4"/><rect x="5" y="8" width="2" height="2" fill="#a8a8b4"/><rect x="9" y="8" width="2" height="2" fill="#a8a8b4"/></svg>
<!-- ctxmenu -->
<svg style="left:0;top:0" width="1600" height="1200" viewBox="0 0 1600 1200"><polygon points="662.8,408.8 904.3,356.5 906.1,364.5 927.5,347.8 901.1,341.5 902.8,349.5 661.2,401.8" fill="#17a98c"/></svg>
<div class="abs" style="left:150px;top:368px;width:344px;height:294px;background:#f7f7f7;border:1px solid #cdcdcd;box-shadow:2.5px 2.5px 3px rgba(0,0,0,0.38)"></div>
<div class="abs" style="left:154px;top:397px;width:327.5px;height:25px;background:#91c9f7"></div>
<div class="abs" style="left:160px;top:476.0px;width:325px;height:1px;background:#d2d2d2"></div>
<div class="abs" style="left:160px;top:510.0px;width:325px;height:1px;background:#d2d2d2"></div>
<div class="abs" style="left:160px;top:569.0px;width:325px;height:1px;background:#d2d2d2"></div>
<div class="abs" style="left:160px;top:603.0px;width:325px;height:1px;background:#d2d2d2"></div>
<svg style="left:158px;top:375px" width="19" height="19" viewBox="0 0 19 19"><path d="M6.2,4 H10 V14.5 H6.2 Z" fill="#040488"/><path d="M0.2,13.7 H17.8 V17.7 H0.2 Z" fill="#040488"/><path d="M10,9 L14.8,13.7 H10 Z" fill="#f5a21c"/><rect x="9" y="0.6" width="9" height="7.4" fill="#e4e4e4" stroke="#777" stroke-width="1"/><rect x="9" y="0.6" width="9" height="2.2" fill="#3a4ea0"/></svg><div class="t" style="left:192px;top:380px;font-size:12.8px;color:#111">Edit...</div><div class="t" style="left:408px;top:380px;font-size:12.8px;color:#111">Enter</div>
<div class="t" style="left:192px;top:405px;font-size:12.8px;color:#111">New Weld</div>
<svg style="left:471.7px;top:405px" width="6" height="9" viewBox="0 0 6 9"><path d="M0,0 V9 L5.5,4.5 Z" fill="#111"/></svg>
<svg style="left:158px;top:425px" width="19" height="19" viewBox="0 0 19 19"><path d="M6.2,4 H10 V14.5 H6.2 Z" fill="#040488"/><path d="M0.2,13.7 H17.8 V17.7 H0.2 Z" fill="#040488"/><path d="M10,9 L14.8,13.7 H10 Z" fill="#f5a21c"/><rect x="9" y="0.5" width="9.5" height="8" fill="#8a8a8a"/><path d="M9,3.2 H18.5 M9,5.9 H18.5 M12.2,0.5 V8.5 M15.4,0.5 V8.5" stroke="#e8e8e8" stroke-width="0.8"/></svg><div class="t" style="left:192px;top:430px;font-size:12.8px;color:#111">Go to Table</div>
<svg style="left:159px;top:451px" width="17" height="17" viewBox="0 0 17 17"><path d="M3,1.5 Q3,0.3 4.6,0.3 Q6.2,0.3 6.2,1.5 L7.3,6 V15.5 Q7.3,17 4.2,17 Q1,17 1,15.5 V9 Z" fill="#2e2e2e"/><path d="M10.8,1.5 Q10.8,0.3 12.4,0.3 Q14,0.3 14,1.5 L16,9 V15.5 Q16,17 12.8,17 Q9.7,17 9.7,15.5 V6 Z" fill="#2e2e2e"/><rect x="6.8" y="6.5" width="3.4" height="4" fill="#2e2e2e"/><path d="M2.4,14.6 H5.8 M11.2,14.6 H14.6" stroke="#8a8a8a" stroke-width="1"/></svg><div class="t" style="left:192px;top:455px;font-size:12.8px;color:#111">Find Weld...</div>
<svg style="left:158px;top:483px" width="19" height="19" viewBox="0 0 19 19"><path d="M6.2,4 H10 V14.5 H6.2 Z" fill="#040488"/><path d="M0.2,13.7 H17.8 V17.7 H0.2 Z" fill="#040488"/><path d="M10,9 L14.8,13.7 H10 Z" fill="#f5a21c"/><path d="M9.5,1.5 L17,9 M17,1.5 L9.5,9" stroke="#e81818" stroke-width="2.6"/></svg><div class="t" style="left:192px;top:489px;font-size:12.8px;color:#111">Delete All</div><div class="t" style="left:408px;top:489px;font-size:12.8px;color:#111">Del</div>
<svg style="left:157px;top:517px" width="22" height="20" viewBox="0 0 22 20"><rect x="1" y="7.5" width="19.5" height="11.5" fill="#f4f4f4" stroke="#555" stroke-width="1.2"/><rect x="1" y="6" width="19.5" height="3" fill="#4a4a4a"/><path d="M3.5,12 H6 M8,12 H18 M3.5,14.5 H6 M8,14.5 H18 M3.5,17 H6 M8,17 H18" stroke="#555" stroke-width="1.1"/><path d="M6,5.5 Q8,2 11.5,2.5 L17,1 L19.5,4.5 L15,7.5 Q10.5,8.5 8,7 Z" fill="#e8b894" stroke="#9c6c50" stroke-width="0.6"/><path d="M15.5,0.5 L20.5,0 L21,5 L18,5.5 Z" fill="#4a7ed0"/></svg><div class="t" style="left:192px;top:523px;font-size:12.8px;color:#111">Base Data...</div>
<svg style="left:157px;top:542px" width="23" height="21" viewBox="0 0 23 21"><rect x="0.5" y="0.5" width="20.5" height="5.2" fill="#84d47c"/><path d="M3,2.5 V5.5 M6,3.5 V5.5 M9,2.5 V5.5 M12,3.5 V5.5 M15,2.5 V5.5 M18,3.5 V5.5" stroke="#c8f0c8" stroke-width="0.8"/><text x="0" y="16" font-family="Liberation Sans, sans-serif" font-size="11.5" font-weight="bold" fill="#111" textLength="8.5" lengthAdjust="spacingAndGlyphs">0,</text><text x="8.8" y="16" font-family="Liberation Sans, sans-serif" font-size="11.5" fill="#3a6ad0" textLength="12" lengthAdjust="spacingAndGlyphs">00</text><path d="M9,18.2 H21" stroke="#3a6ad0" stroke-width="1"/></svg><div class="t" style="left:192px;top:548px;font-size:12.8px;color:#111">Units and Decimal Places...</div>
<svg style="left:157px;top:576px" width="22" height="21" viewBox="0 0 22 21"><rect x="0.5" y="0.5" width="3.6" height="3.6" fill="#e02020"/><rect x="4.6" y="0.5" width="3.6" height="3.6" fill="#e8c020"/><rect x="0.5" y="4.6" width="3.6" height="3.6" fill="#30b030"/><rect x="4.6" y="4.6" width="3.6" height="3.6" fill="#3050d0"/><rect x="9" y="7" width="11.5" height="8" fill="#e4e4ec" stroke="#667" stroke-width="1"/><rect x="9" y="7" width="11.5" height="2.4" fill="#3a4ea0"/><text x="1.5" y="18.5" font-family="Liberation Sans, sans-serif" font-size="10.5" font-weight="bold" fill="#222">A</text><path d="M1,20 H9.5" stroke="#222" stroke-width="1" stroke-dasharray="1.5,1"/></svg><div class="t" style="left:192px;top:582px;font-size:12.8px;color:#111">Display Properties...</div>
<svg style="left:159px;top:610px" width="18" height="18" viewBox="0 0 18 18"><path d="M6.5,3 H16.5 M8.5,8.5 H16.5 M8.5,14 H16.5" stroke="#555" stroke-width="1.2"/><path d="M0,3 H4 M2,1 V5 M4,8.5 H5.5 M4,14 H5.5" stroke="#555" stroke-width="1"/></svg><div class="t" style="left:192px;top:616px;font-size:12.8px;color:#111">Expand to Default</div>
<svg style="left:159px;top:635px" width="18" height="20" viewBox="0 0 18 20"><path d="M6.5,3 H16.5 M8.5,8.5 H14.5" stroke="#555" stroke-width="1.2"/><path d="M1,3 H4.5" stroke="#555" stroke-width="1"/><path d="M2.8,1 V2 M2.8,4.2 V6 M2.8,7.5 V9" stroke="#555" stroke-width="1"/><path d="M2.8,19 V12" stroke="#444" stroke-width="1.2"/><path d="M0,14.5 L2.8,10.5 L5.6,14.5 Z" fill="#444"/></svg><div class="t" style="left:192px;top:641px;font-size:12.8px;color:#111">Collapse All</div>
<div class="abs" style="left:480px;top:390px;width:186px;height:87px;background:#f6f6f6;border:7px solid #17a98c;box-shadow:1.5px 2px 2.5px rgba(0,0,0,0.25)"></div>
<div class="abs" style="left:491px;top:397.3px;width:168px;height:24.5px;background:#91c9f7"></div>
<svg style="left:494px;top:399px" width="21" height="20" viewBox="0 0 21 20"><g transform="translate(3,1.5)"><path d="M6.2,4 H10 V14.5 H6.2 Z" fill="#040488"/><path d="M0.2,13.7 H17.8 V17.7 H0.2 Z" fill="#040488"/><path d="M10,9 L14.8,13.7 H10 Z" fill="#f5a21c"/><rect x="7" y="0" width="9.5" height="7.6" fill="#e4e4e4" stroke="#777" stroke-width="1"/><rect x="7" y="0" width="9.5" height="2.2" fill="#3a4ea0"/></g><g transform="translate(0,0) scale(0.85)"><path d="M6,0 L7.3,3.6 L11,2.2 L9,5.6 L12,7.4 L8.4,8 L9,12 L6,9.4 L3,12 L3.6,8 L0,7.4 L3,5.6 L1,2.2 L4.7,3.6 Z" fill="#f6ee20" stroke="#b0a010" stroke-width="0.5"/></g></svg>
<div class="t" style="left:529px;top:405px;font-size:12.8px;color:#111">Fillet...</div>
<svg style="left:494px;top:424px" width="21" height="20" viewBox="0 0 21 20"><g transform="translate(3,1.5)"><path d="M6.2,4 H10 V14.5 H6.2 Z" fill="#040488"/><path d="M0.2,13.7 H17.8 V17.7 H0.2 Z" fill="#040488"/><path d="M10,9 L14.8,13.7 H10 Z" fill="#f5a21c"/><rect x="7" y="0" width="9.5" height="7.6" fill="#e4e4e4" stroke="#777" stroke-width="1"/><rect x="7" y="0" width="9.5" height="2.2" fill="#3a4ea0"/></g><g transform="translate(0,0) scale(0.85)"><path d="M6,0 L7.3,3.6 L11,2.2 L9,5.6 L12,7.4 L8.4,8 L9,12 L6,9.4 L3,12 L3.6,8 L0,7.4 L3,5.6 L1,2.2 L4.7,3.6 Z" fill="#f6ee20" stroke="#b0a010" stroke-width="0.5"/></g></svg>
<div class="t" style="left:529px;top:430px;font-size:12.8px;color:#111">Corner Fillet...</div>
<svg style="left:494px;top:449px" width="21" height="20" viewBox="0 0 21 20"><g transform="translate(3,1.5)"><path d="M6.2,4 H10 V14.5 H6.2 Z" fill="#040488"/><path d="M0.2,13.7 H17.8 V17.7 H0.2 Z" fill="#040488"/><path d="M10,9 L14.8,13.7 H10 Z" fill="#f5a21c"/><rect x="7" y="0" width="9.5" height="7.6" fill="#e4e4e4" stroke="#777" stroke-width="1"/><rect x="7" y="0" width="9.5" height="2.2" fill="#3a4ea0"/></g><g transform="translate(0,0) scale(0.85)"><path d="M6,0 L7.3,3.6 L11,2.2 L9,5.6 L12,7.4 L8.4,8 L9,12 L6,9.4 L3,12 L3.6,8 L0,7.4 L3,5.6 L1,2.2 L4.7,3.6 Z" fill="#f6ee20" stroke="#b0a010" stroke-width="0.5"/></g></svg>
<div class="t" style="left:529px;top:455px;font-size:12.8px;color:#111">Lap Fillet...</div>
<!-- overlay -->
<svg style="left:0;top:1188px" width="1600" height="12" viewBox="0 1188 1600 12">
<path d="M0,1188 H1.5 V1191.5 A8,8 0 0 0 9.5,1199.5 H1590.5 A8,8 0 0 0 1598.5,1191.5 V1188 H1600 V1200 H0 Z" fill="#ffffff"/>
<path d="M1.5,1188 V1191.5 A8,8 0 0 0 9.5,1199.5 H1590.5 A8,8 0 0 0 1598.5,1191.5 V1188" fill="none" stroke="#a9a9ad" stroke-width="1"/>
<path d="M455,1199.5 H660" stroke="#343850" stroke-width="1"/>
</svg>

</div>
</body></html>
